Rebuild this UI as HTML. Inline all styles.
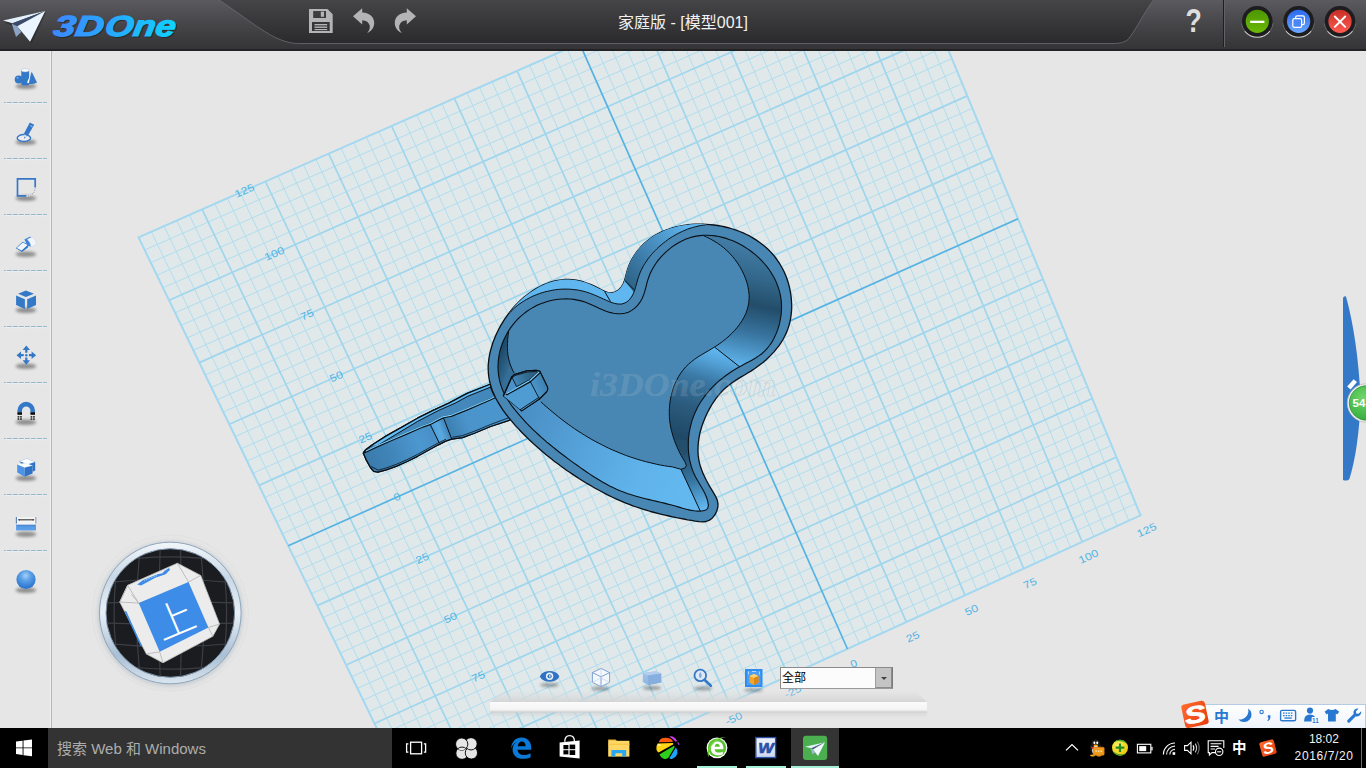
<!DOCTYPE html>
<html lang="zh"><head><meta charset="utf-8"><title>3D One</title>
<style>
html,body{margin:0;padding:0;}
body{width:1366px;height:768px;overflow:hidden;background:#e6e6e6;font-family:"Liberation Sans","Noto Sans CJK SC",sans-serif;}
#app{position:relative;width:1366px;height:768px;overflow:hidden;background:#e6e6e6;}
#canvas{position:absolute;left:0;top:0;}
.abs{position:absolute;}

</style></head><body>
<div id="app">
<svg id="canvas" width="1366" height="768" viewBox="0 0 1366 768">
<polygon points="138.5,237.3 889.3,-92.9 1140.5,515.3 430.6,839.1" fill="#e0e8ea"/>
<path d="M442.6 833.6L151.3 231.7M454.7 828.1L164 226.1M466.7 822.7L176.7 220.6M478.7 817.2L189.4 215M502.6 806.3L214.8 203.8M514.6 800.8L227.4 198.2M526.6 795.3L240.1 192.7M538.6 789.9L252.8 187.1M562.5 779L278.1 176M574.4 773.5L290.7 170.4M586.4 768.1L303.4 164.8M598.3 762.6L316 159.3M622.1 751.7L341.2 148.2M634.1 746.3L353.8 142.6M646 740.9L366.4 137.1M657.9 735.4L379 131.5M681.7 724.6L404.2 120.5M693.5 719.2L416.8 114.9M705.4 713.8L429.3 109.4M717.3 708.3L441.9 103.9M741 697.5L467 92.9M752.9 692.1L479.5 87.3M764.7 686.7L492 81.8M776.6 681.3L504.6 76.3M800.2 670.5L529.6 65.3M812 665.1L542.1 59.8M823.9 659.7L554.6 54.3M835.7 654.3L567.1 48.8M859.3 643.6L592 37.8M871 638.2L604.5 32.4M882.8 632.8L617 26.9M894.6 627.5L629.4 21.4M918.1 616.7L654.3 10.4M929.9 611.4L666.7 5M941.7 606L679.2 -0.5M953.4 600.6L691.6 -5.9M976.9 589.9L716.4 -16.9M988.6 584.6L728.8 -22.3M1000.3 579.2L741.2 -27.8M1012 573.9L753.6 -33.2M1035.4 563.2L778.3 -44.1M1047.1 557.9L790.7 -49.5M1058.8 552.5L803 -55M1070.5 547.2L815.4 -60.4M1093.9 536.6L840.1 -71.3M1105.5 531.2L852.4 -76.7M1117.2 525.9L864.7 -82.1M1128.8 520.6L877 -87.5M425.1 827.7L1135.7 503.7M419.5 816.2L1130.9 492.1M413.9 804.7L1126.1 480.5M408.3 793.2L1121.3 468.8M397.1 770L1111.6 445.4M391.5 758.4L1106.8 433.7M385.8 746.8L1102 422M380.2 735.2L1097.1 410.2M368.9 711.8L1087.3 386.6M363.2 700.1L1082.5 374.7M357.5 688.4L1077.6 362.9M351.8 676.7L1072.7 351M340.3 653.1L1062.8 327.2M334.6 641.3L1057.9 315.2M328.8 629.4L1052.9 303.2M323.1 617.5L1048 291.2M311.5 593.7L1038 267.1M305.7 581.8L1033 255.1M299.9 569.8L1028.1 243M294.1 557.8L1023 230.9M282.4 533.8L1013 206.5M276.6 521.7L1008 194.3M270.7 509.6L1002.9 182.1M264.8 497.5L997.9 169.9M253 473.2L987.7 145.3M247.1 461L982.6 133M241.2 448.8L977.5 120.7M235.2 436.6L972.4 108.3M223.3 412L962.2 83.5M217.3 399.7L957.1 71.1M211.4 387.4L951.9 58.6M205.4 375L946.8 46.1M193.3 350.2L936.4 21.1M187.3 337.8L931.2 8.5M181.2 325.3L926 -4.1M175.2 312.8L920.8 -16.7M163 287.8L910.4 -42M156.9 275.2L905.1 -54.7M150.8 262.6L899.9 -67.4M144.7 250L894.6 -80.2" stroke="#b0deef" stroke-width="1" fill="none"/>
<path d="M490.6 811.7L202.1 209.4M550.5 784.4L265.4 181.5M610.2 757.2L328.6 153.7M669.8 730L391.6 126M729.2 702.9L454.4 98.4M788.4 675.9L517.1 70.8M906.4 622.1L641.9 15.9M965.1 595.3L704 -11.4M1023.7 568.5L765.9 -38.7M1082.2 541.9L827.7 -65.8M402.7 781.6L1116.5 457.1M374.5 723.5L1092.2 398.4M346.1 664.9L1067.7 339.1M317.3 605.6L1043 279.2M258.9 485.4L992.8 157.6M229.3 424.3L967.3 95.9M199.3 362.6L941.6 33.6M169.1 300.3L915.6 -29.4" stroke="#9fd6ed" stroke-width="1.7" fill="none"/>
<polygon points="138.5,237.3 889.3,-92.9 1140.5,515.3 430.6,839.1" fill="none" stroke="#a4d8f0" stroke-width="2" stroke-linejoin="miter"/>
<path d="M847.5 649L579.6 43.3M288.3 545.8L1018 218.7" stroke="#55b3e3" stroke-width="1.7" fill="none"/>
<g font-family="'Liberation Sans',sans-serif" font-size="10.3" fill="#4fb4e4" stroke="#e0e8ea" stroke-width="0">
<text x="254.0" y="186.6" transform="rotate(-23.7 254.0 186.6)" text-anchor="end" dominant-baseline="central" textLength="20.6" lengthAdjust="spacingAndGlyphs">125</text>
<text x="283.8" y="249.6" transform="rotate(-23.8 283.8 249.6)" text-anchor="end" dominant-baseline="central" textLength="20.6" lengthAdjust="spacingAndGlyphs">100</text>
<text x="313.3" y="312.1" transform="rotate(-23.9 313.3 312.1)" text-anchor="end" dominant-baseline="central" textLength="13.6" lengthAdjust="spacingAndGlyphs">75</text>
<text x="342.6" y="373.9" transform="rotate(-24.0 342.6 373.9)" text-anchor="end" dominant-baseline="central" textLength="13.6" lengthAdjust="spacingAndGlyphs">50</text>
<text x="371.5" y="435.1" transform="rotate(-24.1 371.5 435.1)" text-anchor="end" dominant-baseline="central" textLength="13.6" lengthAdjust="spacingAndGlyphs">25</text>
<text x="400.1" y="495.7" transform="rotate(-24.1 400.1 495.7)" text-anchor="end" dominant-baseline="central" textLength="6.6" lengthAdjust="spacingAndGlyphs">0</text>
<text x="428.5" y="555.6" transform="rotate(-24.2 428.5 555.6)" text-anchor="end" dominant-baseline="central" textLength="13.6" lengthAdjust="spacingAndGlyphs">25</text>
<text x="456.6" y="615.0" transform="rotate(-24.3 456.6 615.0)" text-anchor="end" dominant-baseline="central" textLength="13.6" lengthAdjust="spacingAndGlyphs">50</text>
<text x="484.4" y="673.8" transform="rotate(-24.4 484.4 673.8)" text-anchor="end" dominant-baseline="central" textLength="13.6" lengthAdjust="spacingAndGlyphs">75</text>
<text x="1146.6" y="530.1" transform="rotate(-24.5 1146.6 530.1)" text-anchor="middle" dominant-baseline="central" textLength="20.6" lengthAdjust="spacingAndGlyphs">125</text>
<text x="1088.4" y="556.6" transform="rotate(-24.5 1088.4 556.6)" text-anchor="middle" dominant-baseline="central" textLength="20.6" lengthAdjust="spacingAndGlyphs">100</text>
<text x="1030.0" y="583.3" transform="rotate(-24.5 1030.0 583.3)" text-anchor="middle" dominant-baseline="central" textLength="13.6" lengthAdjust="spacingAndGlyphs">75</text>
<text x="971.5" y="610.0" transform="rotate(-24.5 971.5 610.0)" text-anchor="middle" dominant-baseline="central" textLength="13.6" lengthAdjust="spacingAndGlyphs">50</text>
<text x="912.8" y="636.8" transform="rotate(-24.5 912.8 636.8)" text-anchor="middle" dominant-baseline="central" textLength="13.6" lengthAdjust="spacingAndGlyphs">25</text>
<text x="853.9" y="663.6" transform="rotate(-24.5 853.9 663.6)" text-anchor="middle" dominant-baseline="central" textLength="6.6" lengthAdjust="spacingAndGlyphs">0</text>
<text x="792.8" y="691.5" transform="rotate(-24.5 792.8 691.5)" text-anchor="middle" dominant-baseline="central" textLength="17.6" lengthAdjust="spacingAndGlyphs">-25</text>
<text x="733.7" y="718.5" transform="rotate(-24.5 733.7 718.5)" text-anchor="middle" dominant-baseline="central" textLength="17.6" lengthAdjust="spacingAndGlyphs">-50</text>
</g>
<defs>
<linearGradient id="hF" gradientUnits="userSpaceOnUse" x1="364" y1="460" x2="452" y2="425"><stop offset="0" stop-color="#3a7aab"/><stop offset="0.25" stop-color="#3f83b6"/><stop offset="0.6" stop-color="#4c97cf"/><stop offset="1" stop-color="#4489be"/></linearGradient>
<linearGradient id="hF2" gradientUnits="userSpaceOnUse" x1="446" y1="430" x2="505" y2="405"><stop offset="0" stop-color="#3b7cad"/><stop offset="0.35" stop-color="#4a94cb"/><stop offset="1" stop-color="#4b96ce"/></linearGradient>
<linearGradient id="hFil" gradientUnits="userSpaceOnUse" x1="432" y1="434" x2="448" y2="428"><stop offset="0" stop-color="#4d9ad2"/><stop offset="0.5" stop-color="#5aaae2"/><stop offset="1" stop-color="#3f82b4"/></linearGradient>
<linearGradient id="hCap" gradientUnits="userSpaceOnUse" x1="531" y1="388" x2="548" y2="380"><stop offset="0" stop-color="#4d9ad0"/><stop offset="1" stop-color="#3b7aa8"/></linearGradient>
<linearGradient id="hIn" gradientUnits="userSpaceOnUse" x1="514" y1="380" x2="536" y2="372"><stop offset="0" stop-color="#4385b6"/><stop offset="1" stop-color="#275875"/></linearGradient>
</defs>
<g stroke-linejoin="round" stroke-linecap="round">
<!-- handle silhouette -->
<path d="M363.3 453.1L365.4 450L371.7 445.3L386.3 435.9L401.9 427.1L417.5 418.2L433.1 410.4L448.8 403.1L467.2 393.4L489.5 384.5L493 393L499 404L506.5 415.5L510 420L490.6 426.5L475 433L462.5 437.6L451.6 439.2L445.6 441.1L438.3 444.8L427.9 450.5L417.5 456.3L407.1 461.5L396.7 466.1L386.3 469.8L377.9 472.1L373.8 471.4L370.6 467.7L366.5 460.4Z" fill="#4387bb" stroke="#0a1016" stroke-width="1.3"/>
<!-- far rim highlight band -->
<path d="M371.7 445.3L386.3 435.9L401.9 427.1L417.5 418.2L433.1 410.4L448.8 403.1L467.2 393.4L489.5 384.5L490.3 386.6L467.8 395.6L455 402.6L438.3 409.9L417.5 420.8L396.7 433.3L376.9 445.3Z" fill="#64bff6"/>
<path d="M376.9 446L396.7 434L417.5 421.5L438.3 410.6L455 403.3L467.8 396.3L490.5 387.2" fill="none" stroke="#0a1016" stroke-width="0.9"/>
<!-- front face -->
<path d="M363.9 453L375.8 447.8L391.5 441L407.1 434.3L422.7 427.5L430.5 424.8L439.1 442.7L445.6 441.1L438.3 444.8L427.9 450.5L417.5 456.3L407.1 461.5L396.7 466.1L386.3 469.8L377.9 472.1L373.8 471.4L370.6 467.7L366.5 460.4Z" fill="url(#hF)"/>
<path d="M430.5 424.8L438.3 420.6L443.75 418.3L451.6 438.8L445.6 441.1L439.1 442.7Z" fill="url(#hFil)"/>
<path d="M443.75 418.3L451.6 416.7L467.2 410.4L490.6 400.3L496.5 397.6L499 404L506.5 415.5L510 420L490.6 426.5L475 433L462.5 437.6L451.6 438.8Z" fill="url(#hF2)"/>
<!-- near rim highlight -->
<path d="M364.5 452.2L375.8 446.9L391.5 440.1L407.1 433.4L422.7 426.6L430.5 423.9L438.3 419.7L443.75 417.2L451.6 415.7L467.2 409.4L490.6 399.3L496 396.8" fill="none" stroke="#0a1016" stroke-width="2.2"/>
<path d="M366 451L375.8 446.3L391.5 439.5L407.1 432.8L422.7 426L430.5 423.3L438.3 419.1L443.75 416.6L451.6 415.1L467.2 408.8L490.6 398.7L495.6 396.2" fill="none" stroke="#7bd0ff" stroke-width="1.1"/>
<!-- bottom double line -->
<path d="M371.5 466.7L378.3 470.2L386.3 467.9L396.7 464.2L407.1 459.6L417.5 454.4L427.9 448.6L438.3 442.9L445.6 439.4" fill="none" stroke="#0a1016" stroke-width="0.8"/>
<path d="M453 437.2L462.5 435.6L475 431L490.6 424.5L508 418" fill="none" stroke="#0a1016" stroke-width="0.8"/>
<!-- seams -->
<path d="M430.5 425L439.1 442.7M443.75 418.5L451.6 438.8" stroke="#0a1016" stroke-width="1" fill="none"/>
<!-- outline again on top -->
<path d="M363.3 453.1L365.4 450L371.7 445.3L386.3 435.9L401.9 427.1L417.5 418.2L433.1 410.4L448.8 403.1L467.2 393.4L489.5 384.5M510 420L490.6 426.5L475 433L462.5 437.6L451.6 439.2L445.6 441.1L438.3 444.8L427.9 450.5L417.5 456.3L407.1 461.5L396.7 466.1L386.3 469.8L377.9 472.1L373.8 471.4L370.6 467.7L366.5 460.4L363.3 453.1" fill="none" stroke="#0a1016" stroke-width="1.3"/>

</g>

<defs>
<linearGradient id="gOW" gradientUnits="userSpaceOnUse" x1="626" y1="280" x2="690" y2="226"><stop offset="0" stop-color="#2e6488"/><stop offset="0.35" stop-color="#3f7fae"/><stop offset="1" stop-color="#60b6ee"/></linearGradient>
<linearGradient id="gRL" gradientUnits="userSpaceOnUse" x1="742" y1="238" x2="716" y2="362"><stop offset="0" stop-color="#447fa9"/><stop offset="0.28" stop-color="#33688c"/><stop offset="0.5" stop-color="#234d6a"/><stop offset="0.72" stop-color="#38749f"/><stop offset="1" stop-color="#60b6ee"/></linearGradient>
<linearGradient id="gCC" gradientUnits="userSpaceOnUse" x1="716" y1="350" x2="680" y2="470"><stop offset="0" stop-color="#60b6ee"/><stop offset="0.1" stop-color="#52a0d6"/><stop offset="0.25" stop-color="#3b79a6"/><stop offset="0.5" stop-color="#2a5a7c"/><stop offset="0.75" stop-color="#204866"/><stop offset="1" stop-color="#2d6185"/></linearGradient>
<linearGradient id="gTP" gradientUnits="userSpaceOnUse" x1="684" y1="452" x2="703" y2="508"><stop offset="0" stop-color="#234e6c"/><stop offset="0.5" stop-color="#3675a0"/><stop offset="1" stop-color="#60b6ee"/></linearGradient>
<linearGradient id="gBT" gradientUnits="userSpaceOnUse" x1="500" y1="400" x2="690" y2="480"><stop offset="0" stop-color="#4688bd"/><stop offset="0.4" stop-color="#539fd6"/><stop offset="0.75" stop-color="#5fb3ea"/><stop offset="1" stop-color="#62b8ef"/></linearGradient>
<linearGradient id="gLC" gradientUnits="userSpaceOnUse" x1="499" y1="350" x2="515" y2="356"><stop offset="0" stop-color="#1c4460"/><stop offset="0.6" stop-color="#2a5d82"/><stop offset="1" stop-color="#356f98"/></linearGradient>
<clipPath id="cC"><path d="M498 367.5 L498.1 363.7 L498.4 359.9 L498.9 356.1 L499.6 352.4 L500.6 348.6 L501.8 345 L503.1 341.4 L504.7 337.9 L506.5 334.5 L508.4 331.1 L510.5 327.9 L512.8 324.8 L515.3 321.9 L517.9 319 L520.6 316.4 L523.6 313.9 L526.6 311.5 L529.8 309.4 L533.1 307.4 L536.5 305.6 L540.1 304 L543.7 302.7 L547.3 301.5 L551 300.5 L554.8 299.8 L558.6 299.3 L562.4 299 L566.2 298.9 L570 299 L573.8 299.4 L577.5 300.1 L581.2 300.9 L584.9 302.1 L588.5 303.4 L592 305 L595.5 306.6 L599 308.3 L602.5 309.8 L606.1 311.2 L609.8 312.4 L613.6 313.3 L617.4 313.7 L621.2 313.7 L624.8 313.2 L628.4 312.2 L631.7 310.4 L634.8 308.1 L637.6 305.3 L640 302.2 L642 298.8 L643.5 295.3 L644.7 291.7 L645.7 288 L646.6 284.3 L647.6 280.6 L648.8 277 L650.2 273.5 L651.9 270.1 L653.8 266.7 L655.8 263.5 L658.1 260.4 L660.6 257.4 L663.2 254.6 L666 251.8 L669 249.3 L672 246.9 L675.2 244.7 L678.5 242.7 L681.9 240.9 L685.4 239.3 L689 238 L692.6 236.9 L696.3 236.1 L700 235.6 L703.7 235.3 L707.5 235.3 L711.2 235.5 L715 235.9 L718.7 236.5 L722.5 237.4 L726.2 238.4 L729.8 239.7 L733.5 241.1 L737 242.7 L740.5 244.5 L743.9 246.5 L747.2 248.6 L750.4 250.8 L753.5 253.2 L756.5 255.7 L759.4 258.3 L762.1 261.1 L764.7 264 L767.1 266.9 L769.4 270 L771.5 273.2 L773.4 276.4 L775.2 279.8 L776.7 283.2 L778 286.7 L779.2 290.3 L780.1 293.9 L780.8 297.7 L781.3 301.4 L781.5 305.2 L781.5 309.1 L781.3 312.9 L780.8 316.8 L780.1 320.7 L779.3 324.5 L778.2 328.2 L776.9 331.9 L775.3 335.5 L773.6 339 L771.7 342.4 L769.5 345.5 L767.2 348.5 L764.6 351.2 L761.8 353.7 L758.7 355.9 L755.6 358 L752.3 359.9 L748.9 361.8 L745.4 363.6 L742 365.4 L738.6 367.3 L735.3 369.2 L732 371.3 L728.8 373.5 L725.6 375.7 L722.6 378.1 L719.6 380.5 L716.8 383 L714 385.7 L711.3 388.4 L708.8 391.2 L706.4 394.1 L704.1 397.1 L701.9 400.2 L699.9 403.3 L698 406.6 L696.3 410 L694.7 413.4 L693.3 417 L692 420.6 L691 424.3 L690.1 428.1 L689.3 432 L688.8 435.8 L688.4 439.7 L688.3 443.6 L688.3 447.5 L688.5 451.4 L688.9 455.3 L689.5 459.1 L690.3 462.8 L691.3 466.5 L692.5 470.1 L693.9 473.6 L695.6 476.9 L697.4 480.2 L699.3 483.5 L701.2 486.7 L703.1 490.1 L704.9 493.6 L706.5 497.3 L707.7 501.2 L708.4 505.1 L707.8 508.3 L705.4 510.3 L701.8 511 L697.8 511.1 L693.9 510.7 L690.1 510.1 L686.4 509.2 L682.7 508.2 L679 507.1 L675.3 506 L671.6 505 L667.9 504.1 L664.2 503.1 L660.4 502.2 L656.7 501.4 L652.9 500.5 L649.2 499.6 L645.5 498.7 L641.7 497.7 L638 496.7 L634.4 495.7 L630.7 494.6 L627.1 493.4 L623.5 492.1 L620 490.7 L616.5 489.2 L613 487.6 L609.6 485.9 L606.2 484.1 L602.9 482.3 L599.6 480.3 L596.3 478.3 L593 476.2 L589.8 474.1 L586.6 472 L583.4 469.8 L580.3 467.6 L577.1 465.3 L574 463.1 L570.9 460.9 L567.8 458.6 L564.8 456.3 L561.7 454 L558.7 451.7 L555.7 449.3 L552.7 446.9 L549.8 444.5 L546.8 442.1 L544 439.6 L541.1 437.1 L538.3 434.5 L535.5 431.9 L532.7 429.3 L530 426.6 L527.3 423.9 L524.7 421.1 L522.1 418.2 L519.6 415.4 L517.1 412.4 L514.6 409.4 L512.2 406.3 L510 403.2 L507.9 400 L505.9 396.7 L504.1 393.3 L502.5 389.8 L501.2 386.2 L500.1 382.6 L499.2 378.9 L498.6 375.1 L498.2 371.3Z"/></clipPath>
</defs>
<path d="M488.4 373.3 L488.2 369.6 L488.2 365.9 L488.5 362.2 L488.9 358.5 L489.6 354.7 L490.4 351 L491.5 347.2 L492.6 343.5 L493.9 339.9 L495.4 336.3 L497 332.7 L498.7 329.3 L500.5 325.9 L502.5 322.6 L504.5 319.4 L506.6 316.3 L508.8 313.3 L511.1 310.4 L513.5 307.5 L516 304.8 L518.7 302.1 L521.4 299.6 L524.2 297.1 L527.2 294.7 L530.2 292.5 L533.4 290.4 L536.6 288.4 L539.9 286.6 L543.3 284.9 L546.7 283.5 L550.3 282.2 L553.8 281.2 L557.5 280.4 L561.2 279.8 L564.9 279.5 L568.6 279.5 L572.4 279.7 L576.3 280.2 L580.1 281 L583.8 282 L587.5 283.3 L591.1 284.7 L594.5 286.2 L597.8 287.9 L601 289.6 L604.3 291.2 L607.9 292.6 L611.7 292.9 L615.5 291.8 L618.8 289.7 L621.2 287.1 L623.1 284.1 L624.4 280.8 L625.5 277.2 L626.4 273.5 L627.4 269.8 L628.7 266.1 L630.3 262.6 L632 259.1 L634 255.8 L636.2 252.6 L638.5 249.6 L641.1 246.7 L643.7 244 L646.5 241.5 L649.4 239.2 L652.4 237.1 L655.5 235.1 L658.8 233.4 L662.1 231.7 L665.5 230.3 L669 229 L672.5 227.9 L676.1 226.9 L679.8 226.1 L683.5 225.4 L687.3 224.9 L691 224.5 L694.9 224.2 L698.7 224.1 L702.5 224.1 L706.3 224.3 L710.1 224.6 L714 225 L717.7 225.5 L721.5 226.2 L725.2 227 L728.9 227.9 L732.6 229 L736.2 230.2 L739.7 231.5 L743.2 232.9 L746.6 234.5 L750 236.2 L753.2 238.1 L756.4 240.1 L759.4 242.2 L762.4 244.4 L765.2 246.8 L768 249.3 L770.6 251.9 L773.1 254.7 L775.4 257.5 L777.6 260.6 L779.7 263.7 L781.6 267 L783.4 270.3 L785 273.8 L786.4 277.3 L787.7 281 L788.8 284.6 L789.7 288.4 L790.4 292.1 L791 295.9 L791.4 299.8 L791.6 303.6 L791.7 307.4 L791.5 311.2 L791.1 314.9 L790.6 318.6 L789.8 322.3 L788.9 325.9 L787.7 329.4 L786.3 332.9 L784.7 336.2 L783 339.5 L781 342.7 L778.9 345.8 L776.6 348.7 L774.2 351.6 L771.6 354.4 L769 357.1 L766.2 359.7 L763.3 362.2 L760.3 364.5 L757.2 366.8 L754.1 369 L750.9 371.1 L747.7 373 L744.5 375 L741.2 376.9 L738 378.9 L734.9 380.9 L731.8 383 L728.8 385.2 L726 387.6 L723.2 390.1 L720.6 392.8 L718.2 395.7 L715.9 398.7 L713.7 401.8 L711.6 405 L709.7 408.4 L707.9 411.8 L706.2 415.2 L704.7 418.7 L703.3 422.3 L702 425.9 L700.9 429.5 L699.9 433.2 L699.2 436.9 L698.6 440.6 L698.2 444.3 L698 448 L698 451.7 L698.2 455.4 L698.7 459 L699.4 462.7 L700.4 466.3 L701.6 469.8 L703 473.4 L704.6 476.8 L706.3 480.3 L708.2 483.7 L710.1 487.1 L712.1 490.4 L714 493.6 L715.9 496.9 L717.3 500.3 L718 503.8 L717.8 507.5 L716.7 511.3 L714.9 514.9 L712.4 517.9 L709.5 520.2 L706.2 521.5 L702.7 521.9 L699 521.7 L695.2 521.1 L691.4 520.4 L687.6 519.8 L683.8 519 L680.1 518.3 L676.3 517.6 L672.6 516.8 L668.9 516 L665.2 515.2 L661.5 514.3 L657.9 513.4 L654.3 512.5 L650.6 511.5 L647 510.4 L643.5 509.3 L639.9 508.2 L636.3 507 L632.8 505.8 L629.3 504.4 L625.8 503.1 L622.3 501.6 L618.8 500.1 L615.4 498.6 L612 497 L608.5 495.3 L605.2 493.6 L601.8 491.8 L598.5 490 L595.1 488.2 L591.8 486.3 L588.6 484.4 L585.3 482.5 L582.1 480.5 L578.9 478.5 L575.8 476.4 L572.7 474.4 L569.6 472.3 L566.5 470.2 L563.5 468 L560.4 465.8 L557.5 463.6 L554.5 461.4 L551.6 459.1 L548.7 456.8 L545.8 454.4 L542.9 452 L540.1 449.6 L537.2 447.1 L534.4 444.6 L531.7 442 L528.9 439.4 L526.2 436.7 L523.4 434 L520.7 431.2 L518.1 428.4 L515.4 425.6 L512.9 422.7 L510.4 419.7 L507.9 416.7 L505.6 413.7 L503.3 410.6 L501.2 407.4 L499.2 404.2 L497.3 401 L495.5 397.7 L494 394.3 L492.5 391 L491.3 387.5 L490.3 384 L489.4 380.5 L488.8 376.9Z" fill="#4886b3" stroke="#0a1016" stroke-width="1.3" stroke-linejoin="round"/>
<path d="M508.8 313.3 L511.1 310.4 L513.5 307.5 L516 304.8 L518.7 302.1 L521.4 299.6 L524.2 297.1 L527.2 294.7 L530.2 292.5 L533.4 290.4 L536.6 288.4 L539.9 286.6 L543.3 284.9 L546.7 283.5 L550.3 282.2 L553.8 281.2 L557.5 280.4 L561.2 279.8 L564.9 279.5 L568.6 279.5 L572.4 279.7 L576.3 280.2 L580.1 281 L583.8 282 L587.5 283.3 L591.1 284.7 L594.5 286.2 L597.8 287.9 L601 289.6 L604.3 291.2 L607.9 292.6 L611.7 292.9 L615.5 291.8 L618.8 289.7 L621.2 287.1 L623.1 284.1 L624.4 280.8 L625.5 277.2 L626.4 273.5 L627.4 269.8 L628.7 266.1 L630.3 262.6 L632 259.1 L634 255.8 L636.2 252.6 L638.5 249.6 L641.1 246.7 L643.7 244 L646.5 241.5 L649.4 239.2 L652.4 237.1 L655.5 235.1 L658.8 233.4 L662.1 231.7 L665.5 230.3 L669 229 L672.5 227.9 L676.1 226.9 L679.8 226.1 L683.5 225.4 L687.3 224.9 L691 224.5 L694.9 224.2 L698.7 224.1 L702.5 224.1 L706.3 224.3 L705.8 224.9 L703.2 225.2 L700.5 225.6 L697.9 226.1 L695.3 226.8 L692.6 227.5 L690 228.3 L687.4 229.2 L684.9 230.3 L682.3 231.4 L679.8 232.6 L677.3 233.8 L674.9 235.2 L672.5 236.6 L670.1 238.1 L667.8 239.7 L665.6 241.4 L663.3 243.1 L661.2 244.9 L659.1 246.7 L657.1 248.6 L655.1 250.6 L653.2 252.6 L651.4 254.6 L649.7 256.7 L648 258.9 L646.5 261.1 L645 263.3 L643.6 265.6 L642.3 268 L641.1 270.4 L640 272.9 L639 275.5 L638.1 278.2 L637.3 281 L636.5 283.9 L635.7 286.7 L634.9 289.5 L633.9 292.2 L632.8 294.7 L631.5 297 L629.9 299.1 L628.2 300.9 L626.2 302.3 L624.1 303.3 L621.9 304 L619.5 304.1 L617 303.9 L614.5 303.4 L611.9 302.6 L609.2 301.6 L606.5 300.4 L603.8 299.2 L601.1 297.9 L598.4 296.7 L595.8 295.6 L593.2 294.5 L590.6 293.5 L588 292.6 L585.4 291.8 L582.9 291.1 L580.2 290.5 L577.6 290 L574.9 289.7 L572.2 289.4 L569.5 289.2 L566.7 289.1 L564 289.1 L561.2 289.2 L558.4 289.4 L555.7 289.7 L552.9 290.2 L550.2 290.7 L547.5 291.3 L544.8 291.9 L542.1 292.7 L539.4 293.6 L536.8 294.6 L534.2 295.6 L531.7 296.7 L529.2 298 L526.8 299.3 L524.4 300.7 L522.1 302.2 L519.8 303.7 L517.6 305.4 L515.5 307.1 L513.5 308.9 L511.5 310.8 L509.7 312.7Z" fill="#60b6ee"/>
<path d="M624.4 280.8 L625.5 277.2 L626.4 273.5 L627.4 269.8 L628.7 266.1 L630.3 262.6 L632 259.1 L634 255.8 L636.2 252.6 L638.5 249.6 L641.1 246.7 L643.7 244 L646.5 241.5 L649.4 239.2 L652.4 237.1 L655.5 235.1 L658.8 233.4 L662.1 231.7 L665.5 230.3 L669 229 L672.5 227.9 L676.1 226.9 L679.8 226.1 L683.5 225.4 L687.3 224.9 L691 224.5 L694.9 224.2 L698.7 224.1 L702.5 224.1 L706.3 224.3 L705.8 224.9 L703.2 225.2 L700.5 225.6 L697.9 226.1 L695.3 226.8 L692.6 227.5 L690 228.3 L687.4 229.2 L684.9 230.3 L682.3 231.4 L679.8 232.6 L677.3 233.8 L674.9 235.2 L672.5 236.6 L670.1 238.1 L667.8 239.7 L665.6 241.4 L663.3 243.1 L661.2 244.9 L659.1 246.7 L657.1 248.6 L655.1 250.6 L653.2 252.6 L651.4 254.6 L649.7 256.7 L648 258.9 L646.5 261.1 L645 263.3 L643.6 265.6 L642.3 268 L641.1 270.4 L640 272.9 L639 275.5 L638.1 278.2 L637.3 281 L636.5 283.9 L635.7 286.7 L634.9 289.5 L633.9 292.2Z" fill="url(#gOW)"/>
<path d="M509.7 312.7 L511.5 310.8 L513.5 308.9 L515.5 307.1 L517.6 305.4 L519.8 303.7 L522.1 302.2 L524.4 300.7 L526.8 299.3 L529.2 298 L531.7 296.7 L534.2 295.6 L536.8 294.6 L539.4 293.6 L542.1 292.7 L544.8 291.9 L547.5 291.3 L550.2 290.7 L552.9 290.2 L555.7 289.7 L558.4 289.4 L561.2 289.2 L564 289.1 L566.7 289.1 L569.5 289.2 L572.2 289.4 L574.9 289.7 L577.6 290 L580.2 290.5 L582.9 291.1 L585.4 291.8 L588 292.6 L590.6 293.5 L593.2 294.5 L595.8 295.6 L598.4 296.7 L601.1 297.9 L603.8 299.2 L606.5 300.4 L609.2 301.6 L611.9 302.6 L614.5 303.4 L617 303.9 L619.5 304.1 L621.9 304 L624.1 303.3 L626.2 302.3 L628.2 300.9 L629.9 299.1 L631.5 297 L632.8 294.7 L633.9 292.2 L634.9 289.5 L635.7 286.7 L636.5 283.9 L637.3 281 L638.1 278.2 L639 275.5 L640 272.9 L641.1 270.4 L642.3 268 L643.6 265.6 L645 263.3 L646.5 261.1 L648 258.9 L649.7 256.7 L651.4 254.6 L653.2 252.6 L655.1 250.6 L657.1 248.6 L659.1 246.7 L661.2 244.9 L663.3 243.1 L665.6 241.4 L667.8 239.7 L670.1 238.1 L672.5 236.6 L674.9 235.2 L677.3 233.8 L679.8 232.6 L682.3 231.4 L684.9 230.3 L687.4 229.2 L690 228.3 L692.6 227.5 L695.3 226.8 L697.9 226.1 L700.5 225.6 L703.2 225.2 L705.8 224.9" fill="none" stroke="#0a1016" stroke-width="1"/>
<path d="M604.5 291.3L610.5 301.5M624.8 280.5L634 289.6" stroke="#0a1016" stroke-width="1" fill="none"/>
<g clip-path="url(#cC)">
<path d="M498 367.5 L498.1 363.7 L498.4 359.9 L498.9 356.1 L499.6 352.4 L500.6 348.6 L501.8 345 L503.1 341.4 L504.7 337.9 L506.5 334.5 L508.4 331.1 L510.5 327.9 L512.8 324.8 L515.3 321.9 L517.9 319 L520.6 316.4 L523.6 313.9 L526.6 311.5 L529.8 309.4 L533.1 307.4 L536.5 305.6 L540.1 304 L543.7 302.7 L547.3 301.5 L551 300.5 L554.8 299.8 L558.6 299.3 L562.4 299 L566.2 298.9 L570 299 L573.8 299.4 L577.5 300.1 L581.2 300.9 L584.9 302.1 L588.5 303.4 L592 305 L595.5 306.6 L599 308.3 L602.5 309.8 L606.1 311.2 L609.8 312.4 L613.6 313.3 L617.4 313.7 L621.2 313.7 L624.8 313.2 L628.4 312.2 L631.7 310.4 L634.8 308.1 L637.6 305.3 L640 302.2 L642 298.8 L643.5 295.3 L644.7 291.7 L645.7 288 L646.6 284.3 L647.6 280.6 L648.8 277 L650.2 273.5 L651.9 270.1 L653.8 266.7 L655.8 263.5 L658.1 260.4 L660.6 257.4 L663.2 254.6 L666 251.8 L669 249.3 L672 246.9 L675.2 244.7 L678.5 242.7 L681.9 240.9 L685.4 239.3 L689 238 L692.6 236.9 L696.3 236.1 L700 235.6 L703.7 235.3 L707.5 235.3 L711.2 235.5 L715 235.9 L718.7 236.5 L722.5 237.4 L726.2 238.4 L729.8 239.7 L733.5 241.1 L737 242.7 L740.5 244.5 L743.9 246.5 L747.2 248.6 L750.4 250.8 L753.5 253.2 L756.5 255.7 L759.4 258.3 L762.1 261.1 L764.7 264 L767.1 266.9 L769.4 270 L771.5 273.2 L773.4 276.4 L775.2 279.8 L776.7 283.2 L778 286.7 L779.2 290.3 L780.1 293.9 L780.8 297.7 L781.3 301.4 L781.5 305.2 L781.5 309.1 L781.3 312.9 L780.8 316.8 L780.1 320.7 L779.3 324.5 L778.2 328.2 L776.9 331.9 L775.3 335.5 L773.6 339 L771.7 342.4 L769.5 345.5 L767.2 348.5 L764.6 351.2 L761.8 353.7 L758.7 355.9 L755.6 358 L752.3 359.9 L748.9 361.8 L745.4 363.6 L742 365.4 L738.6 367.3 L735.3 369.2 L732 371.3 L728.8 373.5 L725.6 375.7 L722.6 378.1 L719.6 380.5 L716.8 383 L714 385.7 L711.3 388.4 L708.8 391.2 L706.4 394.1 L704.1 397.1 L701.9 400.2 L699.9 403.3 L698 406.6 L696.3 410 L694.7 413.4 L693.3 417 L692 420.6 L691 424.3 L690.1 428.1 L689.3 432 L688.8 435.8 L688.4 439.7 L688.3 443.6 L688.3 447.5 L688.5 451.4 L688.9 455.3 L689.5 459.1 L690.3 462.8 L691.3 466.5 L692.5 470.1 L693.9 473.6 L695.6 476.9 L697.4 480.2 L699.3 483.5 L701.2 486.7 L703.1 490.1 L704.9 493.6 L706.5 497.3 L707.7 501.2 L708.4 505.1 L707.8 508.3 L705.4 510.3 L701.8 511 L697.8 511.1 L693.9 510.7 L690.1 510.1 L686.4 509.2 L682.7 508.2 L679 507.1 L675.3 506 L671.6 505 L667.9 504.1 L664.2 503.1 L660.4 502.2 L656.7 501.4 L652.9 500.5 L649.2 499.6 L645.5 498.7 L641.7 497.7 L638 496.7 L634.4 495.7 L630.7 494.6 L627.1 493.4 L623.5 492.1 L620 490.7 L616.5 489.2 L613 487.6 L609.6 485.9 L606.2 484.1 L602.9 482.3 L599.6 480.3 L596.3 478.3 L593 476.2 L589.8 474.1 L586.6 472 L583.4 469.8 L580.3 467.6 L577.1 465.3 L574 463.1 L570.9 460.9 L567.8 458.6 L564.8 456.3 L561.7 454 L558.7 451.7 L555.7 449.3 L552.7 446.9 L549.8 444.5 L546.8 442.1 L544 439.6 L541.1 437.1 L538.3 434.5 L535.5 431.9 L532.7 429.3 L530 426.6 L527.3 423.9 L524.7 421.1 L522.1 418.2 L519.6 415.4 L517.1 412.4 L514.6 409.4 L512.2 406.3 L510 403.2 L507.9 400 L505.9 396.7 L504.1 393.3 L502.5 389.8 L501.2 386.2 L500.1 382.6 L499.2 378.9 L498.6 375.1 L498.2 371.3Z" fill="url(#gBT)"/>
<polygon points="700,225 800,225 800,372 739.8,366.9 714.8,347.3 730,320 735,280 715,250" fill="url(#gRL)"/>
<polygon points="714.8,347.3 739.8,366.9 745,372 700,420 692,470 681,469.5 660,430 660,390 690,355" fill="url(#gCC)"/>
<polygon points="681,469.5 686.4,465.6 676,440 700,440 715,500 700.4,511.5" fill="url(#gTP)"/>
<polygon points="490,325 512,325 509,356 514,375 520,381 490,400" fill="url(#gLC)"/>
</g>
<path d="M703.1 235.4 L706.8 237.1 L710.5 239 L714 241 L717.4 243.1 L720.7 245.4 L723.8 247.8 L726.8 250.5 L729.7 253.3 L732.4 256.3 L735 259.6 L737.5 263 L739.8 266.6 L741.9 270.4 L743.8 274.2 L745.4 278.2 L746.8 282.2 L747.9 286.3 L748.6 290.4 L749.1 294.4 L749.1 298.4 L748.8 302.4 L748.1 306.2 L747.1 309.9 L745.8 313.6 L744.1 317.1 L742.1 320.6 L739.9 323.9 L737.5 327.1 L734.9 330.2 L732 333.2 L729 336.1 L725.8 338.9 L722.5 341.5 L719.1 344 L715.7 346.3 L712.1 348.5 L708.6 350.7 L705 352.7 L701.5 354.8 L698 356.9 L694.7 359.2 L691.5 361.6 L688.5 364.2 L685.6 367 L683 370.1 L680.6 373.3 L678.4 376.8 L676.5 380.4 L674.8 384.1 L673.3 388 L672.1 392 L671.1 396 L670.3 400.1 L669.7 404.3 L669.4 408.4 L669.3 412.6 L669.4 416.7 L669.7 420.8 L670.3 424.8 L671 428.8 L672 432.7 L673.1 436.6 L674.4 440.5 L675.9 444.3 L677.5 448 L679.2 451.7 L681.1 455.4 L683.2 458.9 L685.3 462.5 L686.4 465.6 L684.6 468.3 L681 469.3 L672.4 466.9 L668.5 466.4 L664.6 465.8 L660.7 465.1 L656.8 464.3 L653 463.4 L649.2 462.5 L645.4 461.6 L641.6 460.5 L637.8 459.4 L634.1 458.2 L630.4 457 L626.7 455.7 L623.1 454.3 L619.4 452.8 L615.8 451.3 L612.2 449.8 L608.7 448.2 L605.2 446.5 L601.7 444.7 L598.2 442.9 L594.8 441.1 L591.3 439.2 L588 437.2 L584.6 435.2 L581.3 433.1 L578 431 L574.7 428.8 L571.5 426.6 L568.3 424.3 L565.1 422 L562 419.6 L558.9 417.2 L555.8 414.7 L552.8 412.2 L549.8 409.7 L546.8 407.1 L543.8 404.5 L540.9 401.8 L538 399.2 L535.1 396.5 L532.3 393.7 L529.5 391 L526.7 388.2 L523.9 385.4 L521.3 382.5 L518.8 379.6 L516.4 376.5 L514.3 373.3 L512.5 370 L511 366.5 L509.7 362.9 L508.7 359.1 L508 355.3 L507.6 351.4 L507.4 347.4 L507.5 343.3 L507.7 339.3 L508.1 335.3 L508.7 331.4 L508.4 331.1 L510.5 327.9 L512.8 324.8 L515.3 321.9 L517.9 319 L520.6 316.4 L523.6 313.9 L526.6 311.5 L529.8 309.4 L533.1 307.4 L536.5 305.6 L540.1 304 L543.7 302.7 L547.3 301.5 L551 300.5 L554.8 299.8 L558.6 299.3 L562.4 299 L566.2 298.9 L570 299 L573.8 299.4 L577.5 300.1 L581.2 300.9 L584.9 302.1 L588.5 303.4 L592 305 L595.5 306.6 L599 308.3 L602.5 309.8 L606.1 311.2 L609.8 312.4 L613.6 313.3 L617.4 313.7 L621.2 313.7 L624.8 313.2 L628.4 312.2 L631.7 310.4 L634.8 308.1 L637.6 305.3 L640 302.2 L642 298.8 L643.5 295.3 L644.7 291.7 L645.7 288 L646.6 284.3 L647.6 280.6 L648.8 277 L650.2 273.5 L651.9 270.1 L653.8 266.7 L655.8 263.5 L658.1 260.4 L660.6 257.4 L663.2 254.6 L666 251.8 L669 249.3 L672 246.9 L675.2 244.7 L678.5 242.7 L681.9 240.9 L685.4 239.3 L689 238 L692.6 236.9 L696.3 236.1 L700 235.6 L703.7 235.3Z" fill="#4886b3"/>
<path d="M703.1 235.4 L706.8 237.1 L710.5 239 L714 241 L717.4 243.1 L720.7 245.4 L723.8 247.8 L726.8 250.5 L729.7 253.3 L732.4 256.3 L735 259.6 L737.5 263 L739.8 266.6 L741.9 270.4 L743.8 274.2 L745.4 278.2 L746.8 282.2 L747.9 286.3 L748.6 290.4 L749.1 294.4 L749.1 298.4 L748.8 302.4 L748.1 306.2 L747.1 309.9 L745.8 313.6 L744.1 317.1 L742.1 320.6 L739.9 323.9 L737.5 327.1 L734.9 330.2 L732 333.2 L729 336.1 L725.8 338.9 L722.5 341.5 L719.1 344 L715.7 346.3 L712.1 348.5 L708.6 350.7 L705 352.7 L701.5 354.8 L698 356.9 L694.7 359.2 L691.5 361.6 L688.5 364.2 L685.6 367 L683 370.1 L680.6 373.3 L678.4 376.8 L676.5 380.4 L674.8 384.1 L673.3 388 L672.1 392 L671.1 396 L670.3 400.1 L669.7 404.3 L669.4 408.4 L669.3 412.6 L669.4 416.7 L669.7 420.8 L670.3 424.8 L671 428.8 L672 432.7 L673.1 436.6 L674.4 440.5 L675.9 444.3 L677.5 448 L679.2 451.7 L681.1 455.4 L683.2 458.9 L685.3 462.5 L686.4 465.6 L684.6 468.3 L681 469.3 L672.4 466.9 L668.5 466.4 L664.6 465.8 L660.7 465.1 L656.8 464.3 L653 463.4 L649.2 462.5 L645.4 461.6 L641.6 460.5 L637.8 459.4 L634.1 458.2 L630.4 457 L626.7 455.7 L623.1 454.3 L619.4 452.8 L615.8 451.3 L612.2 449.8 L608.7 448.2 L605.2 446.5 L601.7 444.7 L598.2 442.9 L594.8 441.1 L591.3 439.2 L588 437.2 L584.6 435.2 L581.3 433.1 L578 431 L574.7 428.8 L571.5 426.6 L568.3 424.3 L565.1 422 L562 419.6 L558.9 417.2 L555.8 414.7 L552.8 412.2 L549.8 409.7 L546.8 407.1 L543.8 404.5 L540.9 401.8" fill="none" stroke="#0a1016" stroke-width="1" stroke-linejoin="round"/>
<path d="M514.3 373.3 L512.5 370 L511 366.5 L509.7 362.9 L508.7 359.1 L508 355.3 L507.6 351.4 L507.4 347.4 L507.5 343.3 L507.7 339.3 L508.1 335.3 L508.7 331.4" fill="none" stroke="#0a1016" stroke-width="1" stroke-linejoin="round"/>
<path d="M498 367.5 L498.1 363.7 L498.4 359.9 L498.9 356.1 L499.6 352.4 L500.6 348.6 L501.8 345 L503.1 341.4 L504.7 337.9 L506.5 334.5 L508.4 331.1 L510.5 327.9 L512.8 324.8 L515.3 321.9 L517.9 319 L520.6 316.4 L523.6 313.9 L526.6 311.5 L529.8 309.4 L533.1 307.4 L536.5 305.6 L540.1 304 L543.7 302.7 L547.3 301.5 L551 300.5 L554.8 299.8 L558.6 299.3 L562.4 299 L566.2 298.9 L570 299 L573.8 299.4 L577.5 300.1 L581.2 300.9 L584.9 302.1 L588.5 303.4 L592 305 L595.5 306.6 L599 308.3 L602.5 309.8 L606.1 311.2 L609.8 312.4 L613.6 313.3 L617.4 313.7 L621.2 313.7 L624.8 313.2 L628.4 312.2 L631.7 310.4 L634.8 308.1 L637.6 305.3 L640 302.2 L642 298.8 L643.5 295.3 L644.7 291.7 L645.7 288 L646.6 284.3 L647.6 280.6 L648.8 277 L650.2 273.5 L651.9 270.1 L653.8 266.7 L655.8 263.5 L658.1 260.4 L660.6 257.4 L663.2 254.6 L666 251.8 L669 249.3 L672 246.9 L675.2 244.7 L678.5 242.7 L681.9 240.9 L685.4 239.3 L689 238 L692.6 236.9 L696.3 236.1 L700 235.6 L703.7 235.3 L707.5 235.3 L711.2 235.5 L715 235.9 L718.7 236.5 L722.5 237.4 L726.2 238.4 L729.8 239.7 L733.5 241.1 L737 242.7 L740.5 244.5 L743.9 246.5 L747.2 248.6 L750.4 250.8 L753.5 253.2 L756.5 255.7 L759.4 258.3 L762.1 261.1 L764.7 264 L767.1 266.9 L769.4 270 L771.5 273.2 L773.4 276.4 L775.2 279.8 L776.7 283.2 L778 286.7 L779.2 290.3 L780.1 293.9 L780.8 297.7 L781.3 301.4 L781.5 305.2 L781.5 309.1 L781.3 312.9 L780.8 316.8 L780.1 320.7 L779.3 324.5 L778.2 328.2 L776.9 331.9 L775.3 335.5 L773.6 339 L771.7 342.4 L769.5 345.5 L767.2 348.5 L764.6 351.2 L761.8 353.7 L758.7 355.9 L755.6 358 L752.3 359.9 L748.9 361.8 L745.4 363.6 L742 365.4 L738.6 367.3 L735.3 369.2 L732 371.3 L728.8 373.5 L725.6 375.7 L722.6 378.1 L719.6 380.5 L716.8 383 L714 385.7 L711.3 388.4 L708.8 391.2 L706.4 394.1 L704.1 397.1 L701.9 400.2 L699.9 403.3 L698 406.6 L696.3 410 L694.7 413.4 L693.3 417 L692 420.6 L691 424.3 L690.1 428.1 L689.3 432 L688.8 435.8 L688.4 439.7 L688.3 443.6 L688.3 447.5 L688.5 451.4 L688.9 455.3 L689.5 459.1 L690.3 462.8 L691.3 466.5 L692.5 470.1 L693.9 473.6 L695.6 476.9 L697.4 480.2 L699.3 483.5 L701.2 486.7 L703.1 490.1 L704.9 493.6 L706.5 497.3 L707.7 501.2 L708.4 505.1 L707.8 508.3 L705.4 510.3 L701.8 511 L697.8 511.1 L693.9 510.7 L690.1 510.1 L686.4 509.2 L682.7 508.2 L679 507.1 L675.3 506 L671.6 505 L667.9 504.1 L664.2 503.1 L660.4 502.2 L656.7 501.4 L652.9 500.5 L649.2 499.6 L645.5 498.7 L641.7 497.7 L638 496.7 L634.4 495.7 L630.7 494.6 L627.1 493.4 L623.5 492.1 L620 490.7 L616.5 489.2 L613 487.6 L609.6 485.9 L606.2 484.1 L602.9 482.3 L599.6 480.3 L596.3 478.3 L593 476.2 L589.8 474.1 L586.6 472 L583.4 469.8 L580.3 467.6 L577.1 465.3 L574 463.1 L570.9 460.9 L567.8 458.6 L564.8 456.3 L561.7 454 L558.7 451.7 L555.7 449.3 L552.7 446.9 L549.8 444.5 L546.8 442.1 L544 439.6 L541.1 437.1 L538.3 434.5 L535.5 431.9 L532.7 429.3 L530 426.6 L527.3 423.9 L524.7 421.1 L522.1 418.2 L519.6 415.4 L517.1 412.4 L514.6 409.4 L512.2 406.3 L510 403.2 L507.9 400 L505.9 396.7 L504.1 393.3 L502.5 389.8 L501.2 386.2 L500.1 382.6 L499.2 378.9 L498.6 375.1 L498.2 371.3Z" fill="none" stroke="#0a1016" stroke-width="1.1"/>
<path d="M714.8 347.3L739.8 366.9M681 469.5L700.4 511.3" stroke="#0a1016" stroke-width="1" fill="none"/>
<g stroke-linejoin="round" stroke-linecap="round">
<!-- ring end inside the heart -->
<path d="M503.4 395.8L511.8 377.1L514.4 374.5L526.9 370.8L536.25 370.3L539.9 371.4L547.2 386.6Q548.6 389.6 546.4 392L539.4 399L521.7 410.9L520.1 409.4Z" fill="#4a92c9" stroke="#0a1016" stroke-width="1.1"/>
<path d="M512.5 377.5L515 375.5L527 372L536 371.3L537.8 372.6L529.5 379.8L517 386.5Z" fill="url(#hIn)" stroke="#0a1016" stroke-width="0.9"/>
<path d="M530 380.7L539.9 371.4L547.2 386.6Q548.6 389.6 546.4 392L539.4 399Z" fill="url(#hCap)"/>
<path d="M503.4 395.8L506.6 393.75L530 380.7L539.4 399L521.7 410.9L520.1 409.4Z" fill="#4f9cd3"/>
<path d="M506.8 394.3L530 381.5L540 372.2" fill="none" stroke="#0a1016" stroke-width="2"/>
<path d="M506.8 393.5L530 380.5L539.6 371.5" fill="none" stroke="#7bd0ff" stroke-width="1.1"/>
<path d="M530 380.9L539.4 399M521 409.2L539 397.3M511.8 376.5L504 394.8" stroke="#0a1016" stroke-width="0.9" fill="none"/>
<path d="M503.4 395.8L511.8 377.1L514.4 374.5L526.9 370.8L536.25 370.3L539.9 371.4L547.2 386.6Q548.6 389.6 546.4 392L539.4 399L521.7 410.9L520.1 409.4" fill="none" stroke="#0a1016" stroke-width="1.1"/>
</g>
<!-- watermark -->
<text x="590" y="396" font-family="'Liberation Serif',serif" font-style="italic" font-weight="bold" font-size="34" textLength="186" lengthAdjust="spacingAndGlyphs" fill="#e2e9ef" fill-opacity="0.13" stroke="#8296a8" stroke-opacity="0.32" stroke-width="0.6">i3DOne.com</text>

</svg>
<div id="sidebar" class="abs" style="left:0;top:51px;width:51px;height:677px;background:#e6e6e6;border-right:1px solid #a0bdd0;box-shadow:inset -1px 0 0 #f1f1f1;">
<svg width="51" height="677" viewBox="0 0 51 677" style="position:absolute;left:0;top:0">
<defs><filter id="sbBlur" x="-30%" y="-100%" width="160%" height="300%"><feGaussianBlur stdDeviation="1.7"/></filter>
<radialGradient id="sbSph" cx="0.48" cy="0.3" r="0.62"><stop offset="0" stop-color="#a4d0f6"/><stop offset="0.45" stop-color="#5a9fe6"/><stop offset="1" stop-color="#2f78d2"/></radialGradient></defs>
<g transform="translate(6,5)"><ellipse cx="19.9" cy="30.3" rx="10.5" ry="2.8" fill="#000" opacity="0.38" filter="url(#sbBlur)"/><circle cx="12.7" cy="23.6" r="4" fill="#3478c8"/><circle cx="11.5" cy="21.8" r="0.9" fill="#7fb0ea"/>
<rect x="15.3" y="14" width="7.8" height="14.3" fill="#3478c8"/><ellipse cx="19.2" cy="28.2" rx="3.9" ry="1.2" fill="#3478c8"/><ellipse cx="19.2" cy="14.2" rx="3.9" ry="1.7" fill="#fff" stroke="#9fbfe6" stroke-width="0.5"/>
<path d="M25.7 15.8L31 26.6Q26.5 29 21.5 27.6Z" fill="#3478c8"/><path d="M24.6 18.5L21 26.6L22.9 27.3Z" fill="#fff"/></g>
<path d="M3.9 52.6H46.9" stroke="#f6f6f6" stroke-width="1" stroke-dasharray="4.9 1.1" stroke-dashoffset="2.9"/><path d="M3.9 51.6H46.9" stroke="#8db4c9" stroke-width="1" stroke-dasharray="4.9 1.1" stroke-dashoffset="2.9"/>
<g transform="translate(6,61)"><ellipse cx="19.9" cy="30.3" rx="10.5" ry="2.8" fill="#000" opacity="0.38" filter="url(#sbBlur)"/><ellipse cx="17.9" cy="26" rx="6.7" ry="3.5" fill="#ececec" stroke="#3478c8" stroke-width="1.4"/>
<path d="M23.8 10.6L28.2 12.8L22 23.4L18.3 26.5L18 21.6Z" fill="#3478c8"/><path d="M18.1 22.6L21.4 24L18.3 26.5Z" fill="#dfe7f2"/><path d="M18.25 25L19.3 25.6L18.3 26.5Z" fill="#2a5fa5"/><path d="M24.2 13.6L26.6 14.8" stroke="#cfe0f5" stroke-width="0.7"/></g>
<path d="M3.9 108.6H46.9" stroke="#f6f6f6" stroke-width="1" stroke-dasharray="4.9 1.1" stroke-dashoffset="2.9"/><path d="M3.9 107.6H46.9" stroke="#8db4c9" stroke-width="1" stroke-dasharray="4.9 1.1" stroke-dashoffset="2.9"/>
<g transform="translate(6,117)"><ellipse cx="19.9" cy="30.3" rx="10.5" ry="2.8" fill="#000" opacity="0.38" filter="url(#sbBlur)"/><path d="M29.2 19.5L29.2 10.9L11.5 10.9L11.5 27.9L20.5 27.9" fill="none" stroke="#3478c8" stroke-width="1.7"/>
<path d="M29.2 19.5A8.6 8.6 0 0 1 20.5 27.9" fill="none" stroke="#f4f4f4" stroke-width="1.5"/><path d="M29.2 19.5A8.6 8.6 0 0 1 20.5 27.9" fill="none" stroke="#8d99a8" stroke-width="1.2" stroke-dasharray="1.1 1.1"/></g>
<path d="M3.9 164.6H46.9" stroke="#f6f6f6" stroke-width="1" stroke-dasharray="4.9 1.1" stroke-dashoffset="2.9"/><path d="M3.9 163.6H46.9" stroke="#8db4c9" stroke-width="1" stroke-dasharray="4.9 1.1" stroke-dashoffset="2.9"/>
<g transform="translate(6,173)"><ellipse cx="19.9" cy="30.3" rx="10.5" ry="2.8" fill="#000" opacity="0.38" filter="url(#sbBlur)"/><path d="M9.8 24.3L16.6 17.8L22.6 20.6L22 23.5L16 28Z" fill="#3478c8"/><path d="M10.8 24L16.8 18.6L21.6 20.9L15.6 26.4Z" fill="#f2f6fc"/>
<path d="M18.4 15.6L23.6 12.8L25.2 13L24.8 22.8L21.5 21.6Z" fill="#3b82d6"/><path d="M21.2 15.6Q25 12.6 27 13.8Q30.2 17 30.2 20Q27.5 22.4 25 22.7Q24.6 18.2 21.2 15.6Z" fill="#f2f6fc" stroke="#c8d6ea" stroke-width="0.4"/></g>
<path d="M3.9 220.6H46.9" stroke="#f6f6f6" stroke-width="1" stroke-dasharray="4.9 1.1" stroke-dashoffset="2.9"/><path d="M3.9 219.6H46.9" stroke="#8db4c9" stroke-width="1" stroke-dasharray="4.9 1.1" stroke-dashoffset="2.9"/>
<g transform="translate(6,229)"><ellipse cx="19.9" cy="30.3" rx="10.5" ry="2.8" fill="#000" opacity="0.38" filter="url(#sbBlur)"/><path d="M19.9 10.4L28 13.7L19.9 17.1L12.1 13.7Z" fill="#3478c8"/><path d="M10.1 15.6L18.9 19.2L18.9 29L10.1 25.1Z" fill="#3478c8"/><path d="M21.2 19.2L30 15.6L30 25.1L21.2 29Z" fill="#3478c8"/></g>
<path d="M3.9 276.6H46.9" stroke="#f6f6f6" stroke-width="1" stroke-dasharray="4.9 1.1" stroke-dashoffset="2.9"/><path d="M3.9 275.6H46.9" stroke="#8db4c9" stroke-width="1" stroke-dasharray="4.9 1.1" stroke-dashoffset="2.9"/>
<g transform="translate(6,285)"><ellipse cx="19.9" cy="30.3" rx="10.5" ry="2.8" fill="#000" opacity="0.38" filter="url(#sbBlur)"/><g fill="#3478c8"><path d="M20.3 9.6L24 14.1L21.4 14.1L21.4 16.8L19.2 16.8L19.2 14.1L16.6 14.1Z"/><path d="M20.3 28.8L24 24.3L21.4 24.3L21.4 21.6L19.2 21.6L19.2 24.3L16.6 24.3Z"/><path d="M10.5 19.2L15 15.5L15 18.1L17.7 18.1L17.7 20.3L15 20.3L15 22.9Z"/><path d="M30.1 19.2L25.6 15.5L25.6 18.1L22.9 18.1L22.9 20.3L25.6 20.3L25.6 22.9Z"/><circle cx="20.3" cy="19.2" r="1.2"/></g></g>
<path d="M3.9 332.6H46.9" stroke="#f6f6f6" stroke-width="1" stroke-dasharray="4.9 1.1" stroke-dashoffset="2.9"/><path d="M3.9 331.6H46.9" stroke="#8db4c9" stroke-width="1" stroke-dasharray="4.9 1.1" stroke-dashoffset="2.9"/>
<g transform="translate(6,341)"><ellipse cx="19.9" cy="30.3" rx="10.5" ry="2.8" fill="#000" opacity="0.38" filter="url(#sbBlur)"/><path d="M11.4 20.2L11.4 18.6A8.8 8.8 0 0 1 29 18.6L29 20.2L24.4 20.2L24.4 18.6A4.2 4.2 0 0 0 16 18.6L16 20.2Z" fill="#3478c8"/>
<rect x="11.4" y="20.2" width="4.6" height="2.6" fill="#0a0a0a"/><rect x="24.4" y="20.2" width="4.6" height="2.6" fill="#0a0a0a"/>
<g fill="#222"><rect x="11.6" y="24.1" width="1.7" height="1.5"/><rect x="14.1" y="24.1" width="1.7" height="1.5"/><rect x="11.6" y="26.3" width="1.7" height="1.5"/><rect x="14.1" y="26.3" width="1.7" height="1.5"/><rect x="24.6" y="24.1" width="1.7" height="1.5"/><rect x="27.1" y="24.1" width="1.7" height="1.5"/><rect x="24.6" y="26.3" width="1.7" height="1.5"/><rect x="27.1" y="26.3" width="1.7" height="1.5"/></g></g>
<path d="M3.9 388.6H46.9" stroke="#f6f6f6" stroke-width="1" stroke-dasharray="4.9 1.1" stroke-dashoffset="2.9"/><path d="M3.9 387.6H46.9" stroke="#8db4c9" stroke-width="1" stroke-dasharray="4.9 1.1" stroke-dashoffset="2.9"/>
<g transform="translate(6,397)"><ellipse cx="19.9" cy="30.3" rx="10.5" ry="2.8" fill="#000" opacity="0.38" filter="url(#sbBlur)"/><path d="M13.2 13.2L21 10.6L29.2 13.9L29.2 22.6L26.6 23.8L26.6 17.6L18.6 19.5Z" fill="#2f72c6"/><path d="M13.2 13.2L21 10.6L29 13.9L22 16.2Z" fill="#fafcff"/>
<path d="M11.2 16.2L18.6 19.6L18.6 28.8L11.2 24.6Z" fill="#4e94e6"/><path d="M18.6 19.6L26.6 17.5L26.6 25.6L18.6 28.8Z" fill="#2f72c6"/><path d="M11.2 16.2L19.4 14.9L26.6 17.5L18.6 19.6Z" fill="#fafcff"/></g>
<path d="M3.9 444.6H46.9" stroke="#f6f6f6" stroke-width="1" stroke-dasharray="4.9 1.1" stroke-dashoffset="2.9"/><path d="M3.9 443.6H46.9" stroke="#8db4c9" stroke-width="1" stroke-dasharray="4.9 1.1" stroke-dashoffset="2.9"/>
<g transform="translate(6,453)"><ellipse cx="19.9" cy="30.3" rx="10.5" ry="2.8" fill="#000" opacity="0.38" filter="url(#sbBlur)"/><rect x="10.1" y="13.2" width="19.9" height="7.6" fill="#f4f4f4"/><rect x="10.1" y="20.8" width="19.9" height="5.6" fill="#5a9ee8"/><rect x="10.1" y="20.8" width="19.9" height="0.9" fill="#4a86cc"/>
<rect x="9.8" y="13" width="1.2" height="6.6" fill="#5f86b8"/><rect x="29.2" y="13" width="1.2" height="6.6" fill="#8fa9cc"/>
<path d="M12.6 15.8L27.8 15.8" stroke="#3a3a3a" stroke-width="1.1"/><path d="M11.8 15.8L13.8 14.9L13.8 16.7ZM28.6 15.8L26.6 14.9L26.6 16.7Z" fill="#3a3a3a"/>
<g stroke="#3f78bf" stroke-width="0.5"><path d="M13 21.7v1.2M15.3 21.7v1.2M17.6 21.7v1.2M20 21.7v2M22.4 21.7v1.2M24.7 21.7v1.2M27 21.7v1.2"/></g></g>
<path d="M3.9 500.6H46.9" stroke="#f6f6f6" stroke-width="1" stroke-dasharray="4.9 1.1" stroke-dashoffset="2.9"/><path d="M3.9 499.6H46.9" stroke="#8db4c9" stroke-width="1" stroke-dasharray="4.9 1.1" stroke-dashoffset="2.9"/>
<g transform="translate(6,509)"><ellipse cx="19.9" cy="30.3" rx="10.5" ry="2.8" fill="#000" opacity="0.38" filter="url(#sbBlur)"/><circle cx="20" cy="19.5" r="9.6" fill="url(#sbSph)"/></g>
</svg></div>
<div id="titlebar" class="abs" style="left:0;top:0;width:1366px;height:51px;">
<svg width="1366" height="51" viewBox="0 0 1366 51" style="position:absolute;left:0;top:0">
<defs>
<linearGradient id="tbA" x1="0" y1="0" x2="0" y2="1"><stop offset="0" stop-color="#5a5a5f"/><stop offset="0.55" stop-color="#434346"/><stop offset="1" stop-color="#333335"/></linearGradient>
<linearGradient id="tbB" x1="0" y1="0" x2="0" y2="1"><stop offset="0" stop-color="#454548"/><stop offset="0.6" stop-color="#353537"/><stop offset="1" stop-color="#2a2a2c"/></linearGradient>
<linearGradient id="logoG" gradientUnits="userSpaceOnUse" x1="53" y1="0" x2="175" y2="0"><stop offset="0" stop-color="#3d88ff"/><stop offset="0.45" stop-color="#27a8ff"/><stop offset="1" stop-color="#0fd2ff"/></linearGradient>
<linearGradient id="btG" x1="0" y1="0" x2="0" y2="1"><stop offset="0" stop-color="#4c9600"/><stop offset="1" stop-color="#6cba06"/></linearGradient>
<linearGradient id="btB" x1="0" y1="0" x2="0" y2="1"><stop offset="0" stop-color="#2a69ee"/><stop offset="1" stop-color="#6aa6ff"/></linearGradient>
<linearGradient id="btR" x1="0" y1="0" x2="0" y2="1"><stop offset="0" stop-color="#c52f27"/><stop offset="1" stop-color="#ff5b50"/></linearGradient>
</defs>
<rect x="0" y="0" width="1366" height="51" fill="url(#tbA)"/>
<path d="M219 0C235 10 262 32 278 38.7C287 42.5 293 43.5 300 43.5L1113 43.5C1120 43.5 1124 42.5 1128 39.5C1134 33 1145 11 1153.5 0Z" fill="url(#tbB)"/>
<path d="M219 0C235 10 262 32 278 38.7C287 42.5 293 43.5 300 43.5L1113 43.5C1120 43.5 1124 42.5 1128 39.5C1134 33 1145 11 1153.5 0" fill="none" stroke="#6b6b6f" stroke-width="0.9" opacity="0.9"/>
<rect x="0" y="49" width="1366" height="2" fill="#232325"/>
<!-- separator -->
<rect x="1223" y="0" width="1" height="47" fill="#1f1f21"/><rect x="1224" y="0" width="1" height="47" fill="#626266"/>
<!-- paper plane logo -->
<g>
<polygon points="4.2,22.5 46.2,12.6 31.5,43.6 18.5,28" fill="#000" opacity="0.25"/>
<polygon points="3.1,20.5 45.2,10.9 12.5,23.2" fill="#e4f0fb"/>
<polygon points="12.5,23.2 45.2,10.9 17.2,26.2" fill="#3b4b6b"/>
<polygon points="11.7,23.4 17.2,26.2 21.3,32 16,36.9" fill="#8ba3c4"/>
<polygon points="17.2,26.2 45.2,10.9 30.1,41.8" fill="#eaf5ff"/>
</g>
<!-- 3D One logo text -->
<g font-family="'Liberation Sans',sans-serif" font-weight="bold" font-style="italic" font-size="29" transform="translate(0,36) skewX(-9) translate(0,-36)">
<g fill="#111" stroke="#111" stroke-width="1.2" opacity="0.45" transform="translate(1.3,1.5)">
<text x="52.5" y="36" textLength="50" lengthAdjust="spacingAndGlyphs">3D</text>
<text x="104" y="36" textLength="70.5" lengthAdjust="spacingAndGlyphs">One</text></g>
<g fill="url(#logoG)" stroke="url(#logoG)" stroke-width="1.2">
<text x="52.5" y="36" textLength="50" lengthAdjust="spacingAndGlyphs">3D</text>
<text x="104" y="36" textLength="70.5" lengthAdjust="spacingAndGlyphs">One</text></g>
</g>
<!-- save icon -->
<g fill="#b4b4b6">
<path d="M309 9L327.5 9L332.7 14.2L332.7 33L309 33ZM313.2 11L313.2 18L326 18L326 11ZM312 22L312 31L329.7 31L329.7 22Z" fill-rule="evenodd"/>
<rect x="320.8" y="11.6" width="3.2" height="5.2"/>
<rect x="314.5" y="24" width="12.7" height="1.4"/><rect x="314.5" y="26.5" width="12.7" height="1.4"/><rect x="314.5" y="29" width="12.7" height="1.2"/>
</g>
<!-- undo -->
<path d="M353 16.2L362.2 8.2L362.2 12.6C370 12.8 374.3 17.6 374.2 23.2C374.1 27.6 371.5 31 367.2 33C369.6 30.4 370.3 27.6 369.6 25.2C368.7 22.2 366 20.4 362.2 20.3L362.2 24.6Z" fill="#b4b4b6"/>
<!-- redo -->
<path d="M416 16.2L406.8 8.2L406.8 12.6C399 12.8 394.7 17.6 394.8 23.2C394.9 27.6 397.5 31 401.8 33C399.4 30.4 398.7 27.6 399.4 25.2C400.3 22.2 403 20.4 406.8 20.3L406.8 24.6Z" fill="#b4b4b6"/>
<!-- help -->
<text x="0" y="0" transform="translate(1193.6 32.4) scale(0.82 1)" text-anchor="middle" font-family="'Liberation Sans',sans-serif" font-weight="bold" font-size="32.6" fill="#dedede">?</text>
<!-- window buttons -->
<g>
<path d="M1269.8 31.1A15.9 15.9 0 0 1 1244.8 31.1" fill="none" stroke="#e4e4e4" stroke-width="1.1" opacity="0.85"/>
<path d="M1273.0 23.5A15.9 15.9 0 0 1 1269.8 31.1" fill="none" stroke="#8a8a8c" stroke-width="0.9" opacity="0.6"/><path d="M1244.8 31.1A15.9 15.9 0 0 1 1241.6 23.5" fill="none" stroke="#8a8a8c" stroke-width="0.9" opacity="0.6"/>
<circle cx="1257.3" cy="21.3" r="15.3" fill="#1d1d1f"/><circle cx="1257.3" cy="21.3" r="11.6" fill="url(#btG)"/>
<path d="M1311.1 31.1A15.9 15.9 0 0 1 1286.1 31.1" fill="none" stroke="#e4e4e4" stroke-width="1.1" opacity="0.85"/>
<path d="M1314.3 23.5A15.9 15.9 0 0 1 1311.1 31.1" fill="none" stroke="#8a8a8c" stroke-width="0.9" opacity="0.6"/><path d="M1286.1 31.1A15.9 15.9 0 0 1 1282.9 23.5" fill="none" stroke="#8a8a8c" stroke-width="0.9" opacity="0.6"/>
<circle cx="1298.6" cy="21.3" r="15.3" fill="#1d1d1f"/><circle cx="1298.6" cy="21.3" r="11.6" fill="url(#btB)"/>
<path d="M1352.5 31.1A15.9 15.9 0 0 1 1327.5 31.1" fill="none" stroke="#e4e4e4" stroke-width="1.1" opacity="0.85"/>
<path d="M1355.7 23.5A15.9 15.9 0 0 1 1352.5 31.1" fill="none" stroke="#8a8a8c" stroke-width="0.9" opacity="0.6"/><path d="M1327.5 31.1A15.9 15.9 0 0 1 1324.3 23.5" fill="none" stroke="#8a8a8c" stroke-width="0.9" opacity="0.6"/>
<circle cx="1340.0" cy="21.3" r="15.3" fill="#1d1d1f"/><circle cx="1340.0" cy="21.3" r="11.6" fill="url(#btR)"/>
<rect x="1250.2" y="20.7" width="14.2" height="2.3" fill="#fff"/>
<rect x="1295.6" y="15.8" width="8.8" height="8.8" rx="1.6" fill="none" stroke="#fff" stroke-width="1.2"/><rect x="1292.8" y="18.6" width="8.8" height="8.8" rx="1.6" fill="#4a86f5" stroke="#fff" stroke-width="1.2"/>
<path d="M1334.3 16L1345.7 27.4M1345.7 16L1334.3 27.4" stroke="#fff" stroke-width="1.9" fill="none"/>
</g>
</svg>
<div class="abs" style="left:483px;top:10.5px;width:400px;text-align:center;color:#f2f2f2;font-size:16px;line-height:24px;white-space:nowrap;font-family:'Liberation Sans','Noto Sans CJK SC',sans-serif;">家庭版 - [模型001]</div>
</div>

<svg class="abs" style="left:80px;top:520px" width="190" height="190" viewBox="80 520 190 190">
<defs>
<linearGradient id="vcRing" x1="0" y1="0" x2="0" y2="1"><stop offset="0" stop-color="#f2f6fa"/><stop offset="0.25" stop-color="#c9d8e6"/><stop offset="0.5" stop-color="#e9f0f6"/><stop offset="0.8" stop-color="#a9bfd4"/><stop offset="1" stop-color="#dbe6ef"/></linearGradient>
<clipPath id="vcClip"><circle cx="170.3" cy="613.0" r="64"/></clipPath>
<filter id="vcSh" x="-20%" y="-20%" width="140%" height="140%"><feGaussianBlur stdDeviation="2"/></filter>
</defs>
<circle cx="170.3" cy="614.0" r="73" fill="#9aa6b2" opacity="0.35" filter="url(#vcSh)"/>
<circle cx="170.3" cy="613.0" r="78" fill="none" stroke="#dcdcdc" stroke-width="0.8" opacity="0.8"/>
<circle cx="170.3" cy="613.0" r="70.8" fill="url(#vcRing)" stroke="#8fa5bb" stroke-width="1"/>
<circle cx="170.3" cy="613.0" r="64.3" fill="#1a1c20" stroke="#7f94aa" stroke-width="1"/>
<path d="M120.1 547.0Q108.1 613.0 120.1 679.0M104.30000000000001 562.8Q170.3 550.8 236.3 562.8M140.2 547.0Q133.0 613.0 140.2 679.0M104.30000000000001 582.9Q170.3 575.6 236.3 582.9M160.2 547.0Q157.8 613.0 160.2 679.0M104.30000000000001 603.0Q170.3 600.6 236.3 603.0M180.4 547.0Q182.8 613.0 180.4 679.0M104.30000000000001 623.0Q170.3 625.4 236.3 623.0M200.5 547.0Q207.7 613.0 200.5 679.0M104.30000000000001 643.1Q170.3 650.4 236.3 643.1M220.6 547.0Q232.6 613.0 220.6 679.0M104.30000000000001 663.2Q170.3 675.2 236.3 663.2" fill="none" stroke="#3c3f45" stroke-width="1.2" clip-path="url(#vcClip)"/>
<polygon points="127.6,585.3 177.4,563.2 200.7,575.4 219.5,624.1 212.8,636.3 163.0,662.8 146.4,654.0 119.8,602.0" fill="#ececec" stroke="#c4c4c4" stroke-width="0.8" stroke-linejoin="round"/>
<path d="M127.6 585.3L138.7 603.1M177.4 563.2L188.5 582.0M200.7 575.4L188.5 582.0M219.5 624.1L208.4 627.4M212.8 636.3L208.4 627.4M163.0 662.8L159.7 651.8M146.4 654.0L159.7 651.8M119.8 602.0L138.7 603.1M127.6 585.3L119.8 602.0M138.7 603.1L131.4 594.2" stroke="#b9b9b9" stroke-width="0.9" fill="none"/>
<polygon points="138.7,603.1 188.5,582.0 208.4,627.4 159.7,651.8" fill="#3c8ce8"/>
<polygon points="137.1,584.5 143.1,580.0 157.5,574.3 162.4,573.2 164.6,570.7 169.0,567.9 170.1,569.8 165.7,574.3 155.3,577.8 141.1,585.6" fill="#3c8ce8"/>
<polygon points="124.3,610.8 126.5,611.5 142.2,646.4 140.2,645.6" fill="#3c8ce8"/>
<path d="M144.2 580.5L157.5 575.4" stroke="#d6e6fa" stroke-width="0.7" stroke-dasharray="1 0.8"/>
<text x="173.6" y="617.2" transform="rotate(-23 173.6 617.2)" text-anchor="middle" dominant-baseline="central" font-family="'Noto Sans CJK SC','Liberation Sans',sans-serif" font-weight="300" font-size="40" fill="#fff">上</text>
</svg>
<svg class="abs" style="left:480px;top:655px" width="460" height="65" viewBox="480 655 460 65">
<defs>
<linearGradient id="bbTop" x1="0" y1="0" x2="0" y2="1"><stop offset="0" stop-color="#dcdcdc" stop-opacity="0"/><stop offset="1" stop-color="#d4d4d4" stop-opacity="0.95"/></linearGradient>
<linearGradient id="bbFront" x1="0" y1="0" x2="0" y2="1"><stop offset="0" stop-color="#fbfbfb"/><stop offset="0.75" stop-color="#f4f4f4"/><stop offset="1" stop-color="#cfcfcf"/></linearGradient>
<filter id="bbBlur" x="-30%" y="-100%" width="160%" height="300%"><feGaussianBlur stdDeviation="1.5"/></filter>
<linearGradient id="bbCube" x1="0" y1="0" x2="1" y2="1"><stop offset="0" stop-color="#a6c6ea"/><stop offset="1" stop-color="#7fa8d8"/></linearGradient>
</defs>
<!-- shelf -->
<polygon points="503,690 914,690 927,702 490,702" fill="url(#bbTop)"/>
<rect x="490" y="702" width="437" height="10.5" fill="url(#bbFront)"/>
<rect x="490" y="712" width="437" height="3" fill="#bdbdbd" opacity="0.35" filter="url(#bbBlur)"/>
<!-- shadows -->
<g fill="#000" opacity="0.32" filter="url(#bbBlur)">
<ellipse cx="549.5" cy="685" rx="9.5" ry="2"/><ellipse cx="600.5" cy="688.6" rx="9.5" ry="2"/><ellipse cx="652" cy="688" rx="9.5" ry="2"/><ellipse cx="703" cy="688.4" rx="9.5" ry="2"/><ellipse cx="753.5" cy="690" rx="9.5" ry="1.8"/>
</g>
<!-- eye -->
<path d="M539.8 676.4Q541 673.4 544.4 672Q549.6 670 554.8 672Q558.2 673.4 559.4 676.4Q558.2 679.4 554.8 680.8Q549.6 682.6 544.4 680.8Q541 679.4 539.8 676.4Z" fill="#2f72c4"/><circle cx="549.6" cy="676.3" r="3.7" fill="#e8f0fa"/><circle cx="549.6" cy="676.3" r="2.1" fill="#2f6fbd"/><rect x="549.3" y="675" width="1.2" height="2.4" fill="#e8f0fa"/>
<!-- wire cube -->
<g fill="#f4f7fb" stroke="#7fa3d4" stroke-width="1" stroke-linejoin="round"><path d="M601 668.4L609.6 672.6L609.6 682.4L601 686.6L592.4 682.4L592.4 672.6Z"/><path d="M592.4 672.6L601 676.8L609.6 672.6M601 676.8L601 686.6" fill="none"/><path d="M601 668.4L601 677.8L592.4 682.4M601 677.8L609.6 682.4" fill="none" stroke="#c3d5ee" stroke-width="0.7"/></g>
<!-- shaded cube -->
<path d="M642.8 673L655.8 671.3L661.2 673.4L661.2 682.6L648.2 685L642.8 682Z" fill="url(#bbCube)"/><path d="M642.8 673L655.8 671.3L661.2 673.4L648.2 675.6Z" fill="#b4cfee"/><path d="M648.2 675.6L661.2 673.4L661.2 682.6L648.2 685Z" fill="#86aede"/>
<!-- magnifier -->
<circle cx="700.3" cy="675.4" r="5.8" fill="#dfe9f5" stroke="#3478c8" stroke-width="1.8"/><path d="M704.8 680L710.8 685.8" stroke="#3478c8" stroke-width="2.6" stroke-linecap="round"/><path d="M700.3 672Q703 675.4 700.3 678.4Q697.6 675.4 700.3 672Z" fill="#7fa8dc"/>
<!-- blue box with orange cube -->
<rect x="745" y="669" width="17.5" height="18" fill="#2f8df0"/><rect x="747" y="671" width="13.5" height="14" fill="#4aa0f8"/>
<path d="M749.5 676L754 674L758.5 676L758.5 682.5L754 685L749.5 682.5Z" fill="#f5a623"/><path d="M749.5 676L754 678L758.5 676L754 674Z" fill="#ffd27a"/><path d="M754 678L758.5 676L758.5 682.5L754 685Z" fill="#d9861a"/>
<path d="M748.5 671.5v3M759.5 671.5v3M752 671.5h4" stroke="#c9e2ff" stroke-width="0.8"/>
</svg>
<div class="abs" style="left:780px;top:667px;width:112.5px;height:21.7px;box-sizing:border-box;background:#fcfcfc;border-top:1px solid #8a8a8a;border-left:1px solid #8a8a8a;border-bottom:1px solid #9a9a9a;border-right:1px solid #7a7a7a;">
<div class="abs" style="left:1px;top:0;line-height:20px;font-size:12px;color:#000;font-family:'Liberation Sans','Noto Sans CJK SC',sans-serif;">全部</div>
<div class="abs" style="right:0;top:0;width:15.5px;height:19.7px;background:#c4c4c4;border-left:1px solid #9d9d9d;box-shadow:inset -1px -1px 0 #8c8c8c;"></div>
<div class="abs" style="right:4.5px;top:8.5px;width:0;height:0;border-left:3px solid transparent;border-right:3px solid transparent;border-top:3.2px solid #404040;"></div>
</div>

<svg class="abs" style="left:1336px;top:290px" width="30" height="196" viewBox="1336 290 30 196">
<defs><radialGradient id="rwG" cx="0.4" cy="0.35" r="0.75"><stop offset="0" stop-color="#6fd66a"/><stop offset="1" stop-color="#2fa738"/></radialGradient></defs>
<path d="M1343 299Q1343 296 1346 296.4Q1357.5 338 1360.6 398Q1359 448 1349.4 479Q1347.6 481.6 1343 480Z" fill="#3478c8"/>
<path d="M1347.2 386.6L1353.6 379.2L1357 382L1350.6 389.6Z" fill="#fff"/>
<circle cx="1366.5" cy="403" r="19.2" fill="#f4f4f4" stroke="#b9b9b9" stroke-width="0.8"/><circle cx="1366.5" cy="403" r="17.2" fill="url(#rwG)" stroke="#2c8f34" stroke-width="0.8"/>
<text x="1352.6" y="407.2" font-family="'Liberation Sans',sans-serif" font-weight="bold" font-size="11.5" fill="#fff">54</text>
</svg>

<div class="abs" style="left:1204px;top:704px;width:161px;height:23px;background:linear-gradient(#ffffff,#eef4fc);border-top:1px solid #b4cbe8;border-right:1px solid #b4cbe8;box-sizing:content-box;"></div>
<svg class="abs" style="left:1176px;top:696px" width="190" height="34" viewBox="1176 696 190 34">
<defs><linearGradient id="sgS" x1="0" y1="0" x2="1" y2="1"><stop offset="0" stop-color="#ff6d2c"/><stop offset="1" stop-color="#e63a10"/></linearGradient></defs>
<g transform="rotate(-12 1195 714.4)"><rect x="1183" y="702.4" width="24" height="24" rx="3.2" fill="url(#sgS)"/><text x="1195" y="722.8" text-anchor="middle" font-family="'Liberation Sans',sans-serif" font-weight="bold" font-style="italic" font-size="23.5" fill="#fff" stroke="#fff" stroke-width="0.7" textLength="21.5" lengthAdjust="spacingAndGlyphs">S</text></g>
<g fill="#2878d2">
<!-- moon -->
<path d="M1248 708.4A7.4 7.4 0 1 1 1238.4 719.4A8.6 8.6 0 0 0 1248 708.4Z"/>
<!-- degree comma -->
<circle cx="1261.6" cy="712" r="1.7" fill="none" stroke="#2878d2" stroke-width="1.1"/><path d="M1267.8 715.2h2.6v2.6q0 2 -2.4 3.4l-0.6 -0.8q1.2 -1 1.2 -2.6h-0.8Z"/>
<!-- keyboard -->
<rect x="1280.6" y="710.4" width="15" height="10.4" rx="1.4" fill="none" stroke="#2878d2" stroke-width="1.4"/><path d="M1283 713.2h1.6M1285.6 713.2h1.6M1288.2 713.2h1.6M1290.8 713.2h1.6M1283 715.6h1.6M1285.6 715.6h1.6M1288.2 715.6h1.6M1290.8 715.6h1.6" stroke="#2878d2" stroke-width="1.3" fill="none"/><rect x="1284.4" y="717.4" width="7.4" height="1.3"/>
<!-- person -->
<circle cx="1310" cy="710.6" r="3.1"/><path d="M1304 721.4Q1304 714.6 1310 714.6Q1316 714.6 1316 721.4Z"/>
<rect x="1311.6" y="717" width="7.8" height="6.4" rx="1" fill="#fff"/><text x="1315.5" y="722.6" text-anchor="middle" font-family="'Liberation Sans',sans-serif" font-weight="bold" font-size="6.4" fill="#2878d2">11</text>
<!-- shirt -->
<path d="M1328.2 709L1324.6 711.8L1326.6 714.6L1328 713.6L1328 721.4L1335.8 721.4L1335.8 713.6L1337.2 714.6L1339.2 711.8L1335.6 709Q1331.9 711 1328.2 709Z"/>
<!-- wrench -->
<path d="M1358.6 708.6A4.2 4.2 0 0 0 1353.6 714L1347.6 720A1.5 1.5 0 0 0 1349.8 722.2L1355.8 716.2A4.2 4.2 0 0 0 1361.2 711.2L1358.6 713.8L1356.2 713.4L1356 711.2Z"/>
</g>
</svg>
<div class="abs" style="left:1214px;top:704.5px;width:16px;line-height:22px;font-size:15px;font-weight:bold;color:#2878d2;font-family:'Noto Sans CJK SC','Liberation Sans',sans-serif;">中</div>

<div id="taskbar" class="abs" style="left:0;top:728px;width:1366px;height:40px;background:#000;">
<div class="abs" style="left:48px;top:0;width:344px;height:40px;background:#333333;"></div>
<div class="abs" style="left:791px;top:0;width:48px;height:40px;background:#343434;"></div>
<div class="abs" style="left:57px;top:1px;line-height:40px;font-size:15px;color:#adadad;white-space:nowrap;font-family:'Liberation Sans','Noto Sans CJK SC',sans-serif;">搜索 Web 和 Windows</div>
<svg class="abs" style="left:0;top:0" width="1366" height="40" viewBox="0 728 1366 40">
<defs>
<linearGradient id="tkS" x1="0" y1="0" x2="1" y2="1"><stop offset="0" stop-color="#ff6a2a"/><stop offset="1" stop-color="#e63c12"/></linearGradient>
<linearGradient id="tkW" x1="0" y1="0" x2="0" y2="1"><stop offset="0" stop-color="#ffffff"/><stop offset="1" stop-color="#c9d6ee"/></linearGradient>
<radialGradient id="tk360" cx="0.4" cy="0.35" r="0.7"><stop offset="0" stop-color="#fff36a"/><stop offset="1" stop-color="#e8c400"/></radialGradient>
</defs>
<!-- start -->
<g fill="#fff"><path d="M16 741.6L22.6 740.7L22.6 747.4L16 747.4Z"/><path d="M23.5 740.55L32 739.4L32 747.4L23.5 747.4Z"/><path d="M16 748.3L22.6 748.3L22.6 755L16 754.1Z"/><path d="M23.5 748.3L32 748.3L32 756.3L23.5 755.15Z"/></g>
<!-- task view -->
<g fill="none" stroke="#fff" stroke-width="1.3"><rect x="410.6" y="742.2" width="11" height="11.6"/><path d="M408.4 743.8H406.6V752.2H408.4M423.8 743.8H425.6V752.2H423.8"/></g>
<!-- pinwheel -->
<defs><clipPath id="tkPinC"><circle cx="461.7" cy="744.1" r="6.15"/></clipPath></defs>
<g fill="#e6e6e6" stroke="#000" stroke-width="0.9"><circle cx="462" cy="753.2" r="6.15"/><circle cx="471.4" cy="752.9" r="6.15"/><circle cx="471" cy="743.8" r="6.15"/><circle cx="461.7" cy="744.1" r="6.15"/><circle cx="462" cy="753.2" r="6.15" clip-path="url(#tkPinC)"/></g>
<!-- edge -->
<path d="M511.2 748.4C511.4 741.6 516 737.6 521.6 737.6C527.6 737.6 531.2 742 531.2 747.6L531.2 749.8L517.6 749.8C517.8 753.4 520.6 755 524 755C526.6 755 528.8 754.2 530.6 753.2L530.6 757.2C528.6 758.2 526 758.8 523 758.8C516.6 758.8 512.6 755 512.6 749.4C512.6 746 514.4 743 517.4 741.6C514.6 742.6 512.2 745 511.2 748.4ZM517.8 746.2L525.6 746.2C525.6 743.4 524.2 741.6 521.8 741.6C519.6 741.6 518.2 743.4 517.8 746.2Z" fill="#0a7ad6"/>
<!-- store -->
<g><path d="M559.6 742.6L579.6 740.4L579.6 758.6L559.6 756.4Z" fill="#fff"/><path d="M564.8 741.8C564.8 737.4 567 735.6 569.6 735.6C572.4 735.6 574.4 737.6 574.4 741" fill="none" stroke="#fff" stroke-width="1.3"/>
<g fill="#000"><rect x="563.4" y="745" width="5" height="4.2"/><rect x="569.6" y="744.6" width="5.6" height="4.6"/><rect x="563.4" y="750.2" width="5" height="4.2"/><rect x="569.6" y="750.2" width="5.6" height="4.8"/></g></g>
<!-- explorer -->
<g><path d="M608.2 741L608.2 739.6L615.4 739.6L617 741Z" fill="#e9b73a"/><rect x="608.2" y="740.8" width="21.2" height="15.8" fill="#ffd766"/><rect x="608.2" y="743.6" width="21.2" height="1.4" fill="#f7c748"/><path d="M611.4 756.6L611.4 750L626.2 750L626.2 756.6L622.2 756.6L622.2 753.2L615.4 753.2L615.4 756.6Z" fill="#2aa7ee"/></g>
<!-- colourful fan -->
<g stroke-linejoin="round">
<path d="M659 741.2Q660.6 738.6 662.6 738.1Q666.8 737.2 670.5 738.7Q672.4 739.8 672.8 741.2L672.5 742.1L659.2 742.2Z" fill="#ff5a0e"/>
<path d="M657.6 743.6L673 743L673.4 744.2L658.6 752.5Q656.6 751.4 656.4 749Q656.2 745.6 657.6 743.6Z" fill="#ffd414"/>
<path d="M674.2 745.8L674.7 747.1L668.4 757.8Q666.4 759.4 664 759Q660.8 758 659.4 754.6Z" fill="#2fd01c"/>
<path d="M675.9 747.4Q677.8 749.4 677.4 753.2Q676.4 757 672.4 758.8Q670.4 759.6 669.3 758.3Z" fill="#1ea4ff"/>
<path d="M669.3 736.6Q670.6 735.8 672.6 736.6Q675.6 738 676.8 740.4Q676.8 741.6 675.8 741.8Q673.6 739.4 669.3 736.6Z" fill="#d43cf0"/>
<path d="M677.2 741.4Q678.8 742 679.5 744.4Q679.2 745.2 678.4 744.9Q677.8 743.4 677.2 741.4Z" fill="#9a3ed8"/>
<ellipse cx="659.4" cy="745" rx="1.6" ry="0.9" fill="#fff7b0" opacity="0.8"/>
</g>
<!-- green e -->
<g><circle cx="717" cy="747.8" r="10.4" fill="#fff"/><circle cx="717" cy="747.8" r="9.2" fill="#58c22e"/><path d="M710.8 748.2C711 743.8 713.6 741.4 717.2 741.4C721 741.4 723.4 744 723.4 748L723.4 749.2L714.6 749.2C714.8 751.4 716.4 752.6 718.6 752.6C720.2 752.6 721.6 752.2 722.8 751.4L722.8 754.2C721.6 754.9 720 755.2 718 755.2C713.6 755.2 710.8 752.6 710.8 748.2ZM714.7 746.8L719.8 746.8C719.8 745 718.8 743.8 717.3 743.8C715.9 743.8 714.9 745 714.7 746.8Z" fill="#fff"/><path d="M708.4 757.6Q705.6 750 712 742.4Q718 736.8 726.4 737.2Q720 737.4 714.4 742.4Q708.6 748 708.4 757.6Z" fill="#6fd63a"/></g>
<!-- word -->
<g><rect x="755.8" y="737.6" width="19.8" height="20" fill="url(#tkW)" stroke="#2c50a6" stroke-width="1.4"/><rect x="757" y="738.8" width="17.4" height="3" fill="#e8eefa"/><text x="765.9" y="753.4" text-anchor="middle" font-family="'Liberation Sans',sans-serif" font-weight="bold" font-style="italic" font-size="15" fill="#2c50a6" stroke="#2c50a6" stroke-width="0.7" textLength="15.5" lengthAdjust="spacingAndGlyphs">W</text></g>
<!-- 3D One -->
<g><rect x="803" y="735.8" width="24.2" height="24.3" rx="3" fill="#4bae4f"/><path d="M805 746.7L825 742.3L811.4 748.2Z" fill="#e4f0fb"/><path d="M811.4 748.2L825 742.3L813 749.6Z" fill="#4b5f80"/><path d="M810.6 748.4L813 749.6L815 752.4L812.4 754.4Z" fill="#9fb4cf"/><path d="M813 749.6L825 742.3L818 756Z" fill="#f2f8ff"/></g>
<!-- running indicators -->
<rect x="697" y="766" width="40" height="2" fill="#a6f0d8"/><rect x="746" y="766" width="40" height="2" fill="#a6f0d8"/><rect x="791" y="766" width="48" height="2" fill="#a6f0d8"/>
<!-- tray chevron -->
<path d="M1066 750.4L1072 744.6L1078 750.4" fill="none" stroke="#fff" stroke-width="1.3"/>
<!-- QQ -->
<g><ellipse cx="1095.8" cy="748.6" rx="5.8" ry="6.8" fill="#1a1a1a"/><ellipse cx="1095.8" cy="743.6" rx="4.4" ry="4" fill="#1a1a1a"/><ellipse cx="1095.8" cy="750.4" rx="3.6" ry="4.6" fill="#fff"/><ellipse cx="1094.4" cy="742.8" rx="1" ry="1.4" fill="#fff"/><ellipse cx="1097.2" cy="742.8" rx="1" ry="1.4" fill="#fff"/><ellipse cx="1095.8" cy="745.4" rx="2.2" ry="0.9" fill="#f5a81c"/><path d="M1091.2 746.6Q1095.8 748.8 1100.4 746.6L1100.2 748.2Q1095.8 750.2 1091.4 748.2Z" fill="#e0281e"/><ellipse cx="1092.6" cy="755.4" rx="2.6" ry="1" fill="#f5a81c"/><ellipse cx="1099" cy="755.4" rx="2.6" ry="1" fill="#f5a81c"/><rect x="1093.4" y="747.2" width="10.8" height="8" rx="1" fill="#f09a1e" stroke="#c87412" stroke-width="0.6"/><path d="M1095.4 751.2h1.4M1098 751.2h1.4M1100.6 751.2h1.4" stroke="#fff3d0" stroke-width="1.2"/></g>
<!-- 360 -->
<g><circle cx="1120" cy="747.7" r="8" fill="url(#tk360)"/><path d="M1113 751.6A8 8 0 0 0 1125.6 753.4Q1119 756 1113 751.6ZM1127 743.8A8 8 0 0 0 1114.4 742Q1121 739.4 1127 743.8Z" fill="#3aa22e"/><path d="M1120 743.4V752M1115.7 747.7H1124.3" stroke="#1f8a22" stroke-width="2.2"/></g>
<!-- battery -->
<g><rect x="1137.4" y="744.3" width="13.4" height="8.6" fill="none" stroke="#fff" stroke-width="1.1"/><rect x="1151.3" y="746.8" width="1.3" height="3.6" fill="#fff"/><rect x="1139.2" y="746.1" width="7" height="5" fill="#fff"/></g>
<!-- wifi -->
<g fill="none" stroke="#fff" stroke-width="1.2"><path d="M1163.4 754.6A11.6 11.6 0 0 1 1175 743"/><path d="M1166.6 754.6A8.4 8.4 0 0 1 1175 746.2" opacity="0.9"/><path d="M1169.8 754.6A5.2 5.2 0 0 1 1175 749.4" opacity="0.9"/></g><rect x="1172.6" y="752.2" width="2.6" height="2.6" fill="#fff"/>
<!-- volume -->
<g fill="none" stroke="#fff" stroke-width="1.1"><path d="M1184.6 745.6H1187.4L1191 742.2V753.8L1187.4 750.4H1184.6Z"/><path d="M1193 745.4Q1194.8 748 1193 750.6"/><path d="M1195.2 743.6Q1198 748 1195.2 752.4" opacity="0.8"/><path d="M1197.4 741.8Q1201 748 1197.4 754.2" opacity="0.45"/></g>
<!-- action center -->
<g fill="none" stroke="#fff" stroke-width="1.1"><path d="M1216 752.6H1212L1209.4 755V752.6H1208.2V740.8H1223.8V748"/><path d="M1210.6 743.8H1221.4M1210.6 746.4H1218.6M1210.6 749H1215"/><circle cx="1219.2" cy="751.8" r="3.7" fill="#000"/><path d="M1217.2 751.8H1221.2"/></g>
<!-- sogou s -->
<g transform="rotate(-15 1268 748)"><rect x="1260.6" y="740.6" width="14.8" height="14.8" rx="2" fill="url(#tkS)"/><text x="1268" y="753.6" text-anchor="middle" font-family="'Liberation Sans',sans-serif" font-weight="bold" font-style="italic" font-size="15.5" fill="#fff" textLength="11" lengthAdjust="spacingAndGlyphs">S</text></g>
<!-- clock -->
<g font-family="'Liberation Sans',sans-serif" font-size="12" fill="#f2f2f2" text-anchor="middle"><text x="1323.9" y="743.1">18:02</text><text x="1323.8" y="759.9" textLength="58.4">2016/7/20</text></g>
<rect x="1361" y="728" width="1" height="40" fill="#6a6a6a"/>
</svg>
<div class="abs" style="left:1232px;top:8.6px;width:15px;line-height:20px;font-size:14.5px;font-weight:bold;color:#fff;font-family:'Noto Sans CJK SC','Liberation Sans',sans-serif;">中</div>
</div>

</div>
</body></html>
